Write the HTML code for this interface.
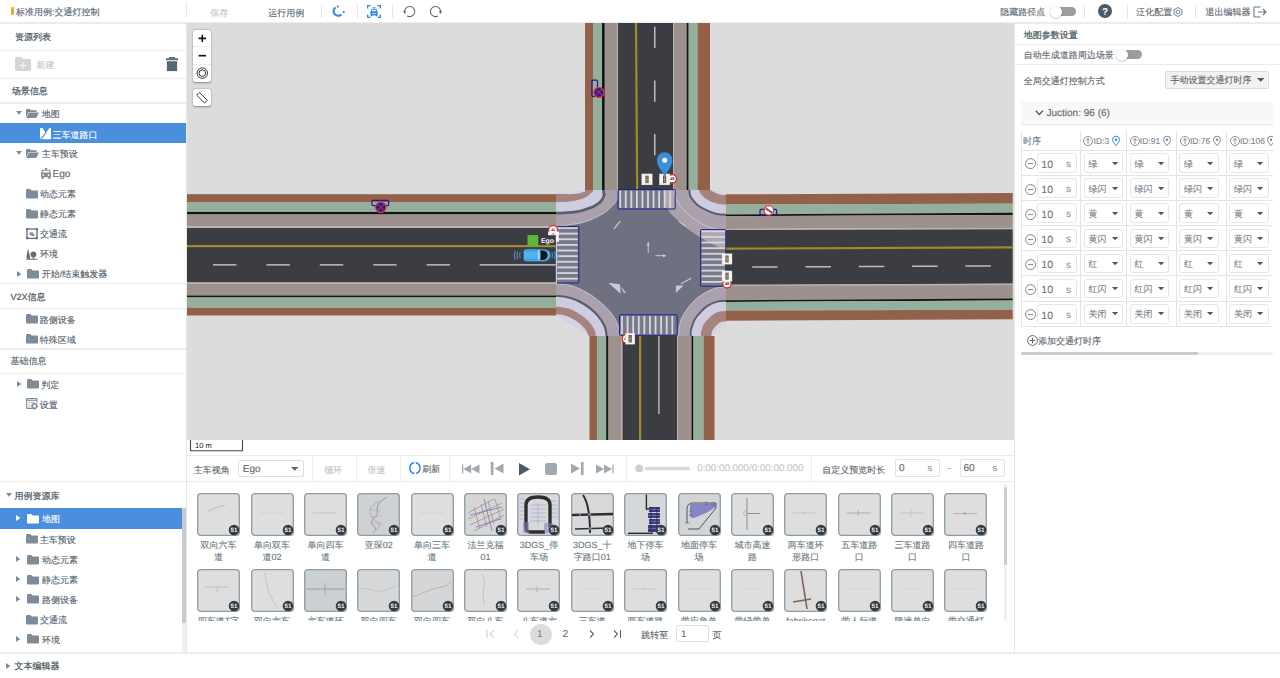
<!DOCTYPE html><html><head><meta charset="utf-8"><style>
*{box-sizing:border-box;margin:0;padding:0}
html,body{width:1280px;height:678px;overflow:hidden}
body{position:relative;background:#fff;font-family:"Liberation Sans",sans-serif;text-rendering:geometricPrecision;color:#52606a;font-size:9px}
.a{position:absolute}
.t{position:absolute;white-space:nowrap;line-height:12px;height:12px;font-size:9px;-webkit-text-stroke:0.12px currentColor}
.hl{background:#4a8fdd}
.sep{position:absolute;background:#e9e9e9}
svg{position:absolute;overflow:visible}
</style></head><body>
<div class="a" style="left:0px;top:21.8px;width:1280px;height:1.8px;background:#ececec;"></div>
<div class="a" style="left:11px;top:7px;width:3px;height:8px;background:#f6a623;border-radius:1px"></div>
<div class="t" style="left:16.0px;top:5.8px;color:#56646e;">标准用例:交通灯控制</div>
<div class="a" style="left:186px;top:2px;width:1px;height:15px;background:#e6e6e6;"></div>
<div class="t" style="left:210.3px;top:6.5px;color:#c4c8cc;">保存</div>
<div class="t" style="left:268.3px;top:6.5px;color:#56626c;">运行用例</div>
<div class="a" style="left:320.5px;top:4.5px;width:1px;height:13px;background:#e4e4e4;"></div>
<div class="a" style="left:356.5px;top:4.5px;width:1px;height:13px;background:#e4e4e4;"></div>
<div class="a" style="left:391.5px;top:4.5px;width:1px;height:13px;background:#e4e4e4;"></div>
<svg style="left:332px;top:5px;" width="14" height="13" viewBox="0 0 14 13"><path d="M3.56 2.43 A4.6 4.6 0 1 0 9.45 9.45" fill="none" stroke="#2d87e6" stroke-width="2"/><circle cx="5.8" cy="1.5" r="1.1" fill="#2d87e6"/><circle cx="11.7" cy="7.1" r="1.1" fill="#2d87e6"/></svg>
<svg style="left:367px;top:4.5px;" width="14" height="13" viewBox="0 0 14 13"><g fill="none" stroke="#2d87e6" stroke-width="1.3"><path d="M0.7 3.5V0.7H3.5M10.5 0.7H13.3V3.5M13.3 9.5V12.3H10.5M3.5 12.3H0.7V9.5"/></g><path d="M5.4 2.2 H8.6 L8 3.3 H6Z" fill="#2d87e6"/><path d="M5 4.2 H9 L9.9 6.9 H4.1Z" fill="none" stroke="#2d87e6" stroke-width="1.1"/><rect x="3.4" y="6.8" width="7.2" height="3.6" rx="0.6" fill="#2d87e6"/><rect x="3.6" y="10" width="1.6" height="1.3" fill="#2d87e6"/><rect x="8.8" y="10" width="1.6" height="1.3" fill="#2d87e6"/><path d="M5.2 8.6 H8.8" stroke="#fff" stroke-width="0.8"/></svg>
<svg style="left:403px;top:5px;" width="13.2" height="13" viewBox="0 0 13.2 13"><path d="M1.67 7.3 A5.1 5.1 0 1 1 4.05 10.87" fill="none" stroke="#56646f" stroke-width="1.05"/><path d="M0.1 6.2 L3.3 6.2 L1.7 9Z" fill="#56646f"/></svg>
<svg style="left:429px;top:5px;" width="13.2" height="13" viewBox="0 0 13.2 13"><path d="M11.53 7.3 A5.1 5.1 0 1 0 9.15 10.87" fill="none" stroke="#56646f" stroke-width="1.05"/><path d="M13.1 6.2 L9.9 6.2 L11.5 9Z" fill="#56646f"/></svg>
<div class="t" style="left:1000.3px;top:5.8px;color:#5b6770;">隐藏路径点</div>
<div class="a" style="left:1051px;top:7.2px;width:25px;height:9px;background:#9d9d9d;border-radius:5px"></div>
<div class="a" style="left:1050px;top:5.8px;width:12px;height:12px;border-radius:50%;background:#fff;box-shadow:0 0.5px 1.5px rgba(0,0,0,.35)"></div>
<div class="a" style="left:1083.5px;top:4.5px;width:1px;height:14px;background:#e4e4e4;"></div>
<svg style="left:1098px;top:4.3px;" width="14" height="14" viewBox="0 0 14 14"><circle cx="7" cy="7" r="7" fill="#4c5b68"/><text x="7" y="10.6" text-anchor="middle" font-family="Liberation Sans" font-weight="bold" font-size="10" fill="#fff">?</text></svg>
<div class="a" style="left:1127px;top:4.5px;width:1px;height:14px;background:#e4e4e4;"></div>
<div class="t" style="left:1136.3px;top:6.3px;color:#5b6770;">泛化配置</div>
<svg style="left:1173px;top:7px;" width="10" height="10" viewBox="0 0 10 10"><path d="M5 0.5 L9 2.8 V7.2 L5 9.5 L1 7.2 V2.8Z" fill="none" stroke="#6d7880" stroke-width="0.9"/><circle cx="5" cy="5" r="1.9" fill="none" stroke="#6d7880" stroke-width="0.9"/></svg>
<div class="a" style="left:1195px;top:4.5px;width:1px;height:14px;background:#e4e4e4;"></div>
<div class="t" style="left:1205.4px;top:6.3px;color:#5b6770;">退出编辑器</div>
<svg style="left:1253px;top:5.5px;" width="14" height="12" viewBox="0 0 14 12"><path d="M7.5 1 H1.8 Q1 1 1 1.8 V10.2 Q1 11 1.8 11 H7.5" fill="none" stroke="#6d7880" stroke-width="1.1"/><path d="M5 6 H13 M10 3 L13 6 L10 9" fill="none" stroke="#6d7880" stroke-width="1.1"/></svg>
<div class="a" style="left:186px;top:23px;width:1px;height:630px;background:#e6e6e6;"></div>
<div class="t" style="left:15.0px;top:31.4px;color:#4f5b64;-webkit-text-stroke:0.22px currentColor;">资源列表</div>
<div class="a" style="left:0px;top:49.5px;width:186px;height:1px;background:#ebebeb;"></div>
<svg style="left:15px;top:56.9px;" width="16" height="14" viewBox="0 0 16 14"><path d="M0 1.5 Q0 0 1.5 0 H6.5 L8 2 H14.5 Q16 2 16 3.5 V12.5 Q16 14 14.5 14 H1.5 Q0 14 0 12.5Z" fill="#d2d5d8"/><path d="M8 5.2 V11.8 M4.6 8.5 H11.4" stroke="#f2f3f4" stroke-width="1.3"/></svg>
<div class="t" style="left:36.4px;top:59.1px;color:#c6c9cc;">新建</div>
<svg style="left:166px;top:56.8px;" width="12" height="14.2" viewBox="0 0 12 14.2"><rect x="3" y="0" width="6" height="1.5" fill="#586670"/><rect x="0" y="1.3" width="12" height="1.9" fill="#586670"/><rect x="0.9" y="4.2" width="10.2" height="9.9" fill="#586670"/></svg>
<div class="a" style="left:0px;top:78.3px;width:186px;height:1px;background:#ebebeb;"></div>
<div class="t" style="left:11.8px;top:85.0px;color:#4f5b64;-webkit-text-stroke:0.22px currentColor;">场景信息</div>
<div class="a" style="left:0px;top:102px;width:186px;height:1.5px;background:#ececec;"></div>
<svg style="left:16px;top:111.0px;" width="6" height="4" viewBox="0 0 6 4"><path d="M0 0 H6 L3 3.8Z" fill="#7d8c98"/></svg>
<svg style="left:26.2px;top:109.1px;" width="13" height="9" viewBox="0 0 13 9"><path d="M0 1 Q0 0 1 0 H3.8 L5 1.2 H9.8 Q10.6 1.2 10.6 2 V3 H2.6 L0 8.6Z" fill="#7d8c98"/><path d="M2.9 3.6 H13 L10.4 9 H0.4Z" fill="#7d8c98"/></svg>
<div class="t" style="left:41.7px;top:108.3px;">地图</div>
<div class="a" style="left:0px;top:123px;width:186px;height:20px;background:#4a8fdd;"></div>
<svg style="left:40px;top:127.8px;" width="11" height="11.2" viewBox="0 0 11 11.2"><rect x="0" y="0" width="11" height="11.2" rx="0.8" fill="#fff"/><path d="M2.6 -0.2 L9.6 -0.2 L5.6 5.2Z" fill="#4a8fdd"/><path d="M5.8 4.8 L0.8 11.4" stroke="#4a8fdd" stroke-width="1.1"/></svg>
<div class="t" style="left:52.6px;top:128.7px;color:#ffffff;">三车道路口</div>
<svg style="left:16px;top:151.0px;" width="6" height="4" viewBox="0 0 6 4"><path d="M0 0 H6 L3 3.8Z" fill="#7d8c98"/></svg>
<svg style="left:26.2px;top:149.1px;" width="13" height="9" viewBox="0 0 13 9"><path d="M0 1 Q0 0 1 0 H3.8 L5 1.2 H9.8 Q10.6 1.2 10.6 2 V3 H2.6 L0 8.6Z" fill="#7d8c98"/><path d="M2.9 3.6 H13 L10.4 9 H0.4Z" fill="#7d8c98"/></svg>
<div class="t" style="left:41.7px;top:148.3px;">主车预设</div>
<svg style="left:40.5px;top:167.5px;" width="10" height="11" viewBox="0 0 10 11"><rect x="3.8" y="0" width="2.4" height="1.6" fill="#7d8c98"/><path d="M1.6 2.2 H8.4 L9.2 5 H0.8Z" fill="none" stroke="#7d8c98" stroke-width="1.1"/><rect x="0" y="5" width="10" height="4.3" rx="0.8" fill="#7d8c98"/><rect x="0.6" y="9" width="2" height="2" fill="#7d8c98"/><rect x="7.4" y="9" width="2" height="2" fill="#7d8c98"/><circle cx="2.3" cy="7.1" r="0.9" fill="#fff"/><circle cx="7.7" cy="7.1" r="0.9" fill="#fff"/></svg>
<div class="t" style="left:52.4px;top:168.5px;color:#5b6770;font-size:10.2px;">Ego</div>
<svg style="left:26.2px;top:188.6px;" width="12" height="10" viewBox="0 0 12 10"><path d="M0 1.2 Q0 0 1.2 0 H4.3 L5.6 1.4 H10.8 Q12 1.4 12 2.6 V8.6 Q12 9.6 10.8 9.6 H1.2 Q0 9.6 0 8.6Z" fill="#7d8c98"/></svg>
<div class="t" style="left:39.9px;top:188.3px;">动态元素</div>
<svg style="left:26.2px;top:208.6px;" width="12" height="10" viewBox="0 0 12 10"><path d="M0 1.2 Q0 0 1.2 0 H4.3 L5.6 1.4 H10.8 Q12 1.4 12 2.6 V8.6 Q12 9.6 10.8 9.6 H1.2 Q0 9.6 0 8.6Z" fill="#7d8c98"/></svg>
<div class="t" style="left:39.9px;top:208.3px;">静态元素</div>
<svg style="left:26px;top:227.6px;" width="12" height="11.4" viewBox="0 0 12 11.4"><rect x="1" y="1" width="10" height="9.4" fill="none" stroke="#5f6d79" stroke-width="1.3"/><rect x="0.2" y="0.2" width="2" height="2" fill="#5f6d79"/><rect x="9.8" y="0.2" width="2" height="2" fill="#5f6d79"/><rect x="0.2" y="9.2" width="2" height="2" fill="#5f6d79"/><rect x="9.8" y="9.2" width="2" height="2" fill="#5f6d79"/><path d="M3.8 4.3 H6.6 L7.4 5.6 V7 H3.4 V5.4Z" fill="#8c98a2"/><path d="M5.2 6.4 H8.6 V8 H5.2Z" fill="#7a8893"/></svg>
<div class="t" style="left:39.9px;top:228.3px;">交通流</div>
<svg style="left:26px;top:247.5px;" width="12" height="12" viewBox="0 0 12 12"><path d="M0.4 11.2 H11.4" stroke="#5f6d79" stroke-width="1"/><path d="M2.2 0.4 C1.4 4 0.4 7.5 0.6 10.8 H4.4 C3.6 7.5 3 4 2.2 0.4Z" fill="#5f6d79"/><circle cx="7.4" cy="6.5" r="2.9" fill="#5f6d79"/><rect x="6.9" y="8" width="1" height="3.2" fill="#5f6d79"/></svg>
<div class="t" style="left:39.9px;top:248.3px;">环境</div>
<svg style="left:16.6px;top:270.5px;" width="4.5" height="6" viewBox="0 0 4.5 6"><path d="M0 0 V6 L4.3 3Z" fill="#7d8c98"/></svg>
<svg style="left:27px;top:268.59999999999997px;" width="12" height="10" viewBox="0 0 12 10"><path d="M0 1.2 Q0 0 1.2 0 H4.3 L5.6 1.4 H10.8 Q12 1.4 12 2.6 V8.6 Q12 9.6 10.8 9.6 H1.2 Q0 9.6 0 8.6Z" fill="#7d8c98"/></svg>
<div class="t" style="left:41.7px;top:268.3px;">开始/结束触发器</div>
<div class="a" style="left:0px;top:283.3px;width:186px;height:1px;background:#ebebeb;"></div>
<div class="t" style="left:10.5px;top:290.6px;color:#4f5b64;-webkit-text-stroke:0.22px currentColor;">V2X信息</div>
<div class="a" style="left:0px;top:307.8px;width:186px;height:1px;background:#ebebeb;"></div>
<svg style="left:26.1px;top:314.0px;" width="12" height="10" viewBox="0 0 12 10"><path d="M0 1.2 Q0 0 1.2 0 H4.3 L5.6 1.4 H10.8 Q12 1.4 12 2.6 V8.6 Q12 9.6 10.8 9.6 H1.2 Q0 9.6 0 8.6Z" fill="#7d8c98"/></svg>
<div class="t" style="left:39.7px;top:313.6px;">路侧设备</div>
<svg style="left:26.1px;top:334.0px;" width="12" height="10" viewBox="0 0 12 10"><path d="M0 1.2 Q0 0 1.2 0 H4.3 L5.6 1.4 H10.8 Q12 1.4 12 2.6 V8.6 Q12 9.6 10.8 9.6 H1.2 Q0 9.6 0 8.6Z" fill="#7d8c98"/></svg>
<div class="t" style="left:39.7px;top:333.6px;">特殊区域</div>
<div class="a" style="left:0px;top:348px;width:186px;height:1.6px;background:#ececec;"></div>
<div class="t" style="left:10.5px;top:355.2px;color:#56636c;-webkit-text-stroke:0.12px currentColor;">基础信息</div>
<div class="a" style="left:0px;top:372.5px;width:186px;height:1px;background:#ebebeb;"></div>
<svg style="left:16.6px;top:380.8px;" width="4.5" height="6" viewBox="0 0 4.5 6"><path d="M0 0 V6 L4.3 3Z" fill="#7d8c98"/></svg>
<svg style="left:27px;top:379.0px;" width="12" height="10" viewBox="0 0 12 10"><path d="M0 1.2 Q0 0 1.2 0 H4.3 L5.6 1.4 H10.8 Q12 1.4 12 2.6 V8.6 Q12 9.6 10.8 9.6 H1.2 Q0 9.6 0 8.6Z" fill="#7d8c98"/></svg>
<div class="t" style="left:41.3px;top:379.3px;">判定</div>
<svg style="left:26px;top:398.2px;" width="12.5" height="11.5" viewBox="0 0 12.5 11.5"><path d="M8 10.4 H1 Q0.6 10.4 0.6 10 V1.1 Q0.6 0.6 1.1 0.6 H10.4 Q10.9 0.6 10.9 1.1 V4.8" fill="none" stroke="#7d8c98" stroke-width="1.1"/><path d="M0.6 2.4 H10.9" stroke="#7d8c98" stroke-width="0.9"/><path d="M2.4 4.4 H4 M5 4.4 H8 M2.4 6.4 H4 M2.4 8.4 H3.6" stroke="#7d8c98" stroke-width="0.7"/><circle cx="8.5" cy="8.1" r="2.4" fill="none" stroke="#7d8c98" stroke-width="1.5"/><path d="M8.5 4.7 V5.8 M8.5 10.4 V11.5 M5.1 8.1 H6.2 M10.8 8.1 H11.9" stroke="#7d8c98" stroke-width="1"/></svg>
<div class="t" style="left:39.7px;top:399.3px;">设置</div>
<div class="a" style="left:0px;top:481px;width:186px;height:1px;background:#ebebeb;"></div>
<svg style="left:5.6px;top:492.7px;" width="6" height="4" viewBox="0 0 6 4"><path d="M0 0 H6 L3 3.8Z" fill="#7d8c98"/></svg>
<div class="t" style="left:14.6px;top:489.7px;color:#4f5b64;-webkit-text-stroke:0.22px currentColor;">用例资源库</div>
<div class="a" style="left:0px;top:508.4px;width:182px;height:20.2px;background:#4a8fdd;"></div>
<svg style="left:16px;top:515.4px;" width="4.5" height="6" viewBox="0 0 4.5 6"><path d="M0 0 V6 L4.3 3Z" fill="#ffffff"/></svg>
<svg style="left:27px;top:513.6px;" width="12" height="10" viewBox="0 0 12 10"><path d="M0 1.2 Q0 0 1.2 0 H4.3 L5.6 1.4 H10.8 Q12 1.4 12 2.6 V8.6 Q12 9.6 10.8 9.6 H1.2 Q0 9.6 0 8.6Z" fill="#ffffff"/></svg>
<div class="t" style="left:42.0px;top:513.3px;color:#ffffff;">地图</div>
<svg style="left:26px;top:534.1px;" width="12" height="10" viewBox="0 0 12 10"><path d="M0 1.2 Q0 0 1.2 0 H4.3 L5.6 1.4 H10.8 Q12 1.4 12 2.6 V8.6 Q12 9.6 10.8 9.6 H1.2 Q0 9.6 0 8.6Z" fill="#7d8c98"/></svg>
<div class="t" style="left:39.7px;top:533.7px;">主车预设</div>
<svg style="left:16.3px;top:556.3px;" width="4.5" height="6" viewBox="0 0 4.5 6"><path d="M0 0 V6 L4.3 3Z" fill="#7d8c98"/></svg>
<svg style="left:26.8px;top:554.5px;" width="12" height="10" viewBox="0 0 12 10"><path d="M0 1.2 Q0 0 1.2 0 H4.3 L5.6 1.4 H10.8 Q12 1.4 12 2.6 V8.6 Q12 9.6 10.8 9.6 H1.2 Q0 9.6 0 8.6Z" fill="#7d8c98"/></svg>
<div class="t" style="left:41.9px;top:554.1px;">动态元素</div>
<svg style="left:16.3px;top:576.3px;" width="4.5" height="6" viewBox="0 0 4.5 6"><path d="M0 0 V6 L4.3 3Z" fill="#7d8c98"/></svg>
<svg style="left:26.8px;top:574.5px;" width="12" height="10" viewBox="0 0 12 10"><path d="M0 1.2 Q0 0 1.2 0 H4.3 L5.6 1.4 H10.8 Q12 1.4 12 2.6 V8.6 Q12 9.6 10.8 9.6 H1.2 Q0 9.6 0 8.6Z" fill="#7d8c98"/></svg>
<div class="t" style="left:41.9px;top:574.1px;">静态元素</div>
<svg style="left:16.3px;top:596.2px;" width="4.5" height="6" viewBox="0 0 4.5 6"><path d="M0 0 V6 L4.3 3Z" fill="#7d8c98"/></svg>
<svg style="left:26.8px;top:594.4000000000001px;" width="12" height="10" viewBox="0 0 12 10"><path d="M0 1.2 Q0 0 1.2 0 H4.3 L5.6 1.4 H10.8 Q12 1.4 12 2.6 V8.6 Q12 9.6 10.8 9.6 H1.2 Q0 9.6 0 8.6Z" fill="#7d8c98"/></svg>
<div class="t" style="left:41.9px;top:594.0px;">路侧设备</div>
<svg style="left:26.1px;top:614.7px;" width="12" height="10" viewBox="0 0 12 10"><path d="M0 1.2 Q0 0 1.2 0 H4.3 L5.6 1.4 H10.8 Q12 1.4 12 2.6 V8.6 Q12 9.6 10.8 9.6 H1.2 Q0 9.6 0 8.6Z" fill="#7d8c98"/></svg>
<div class="t" style="left:40.0px;top:614.3px;">交通流</div>
<svg style="left:16.3px;top:636.2px;" width="4.5" height="6" viewBox="0 0 4.5 6"><path d="M0 0 V6 L4.3 3Z" fill="#7d8c98"/></svg>
<svg style="left:26.8px;top:634.4000000000001px;" width="12" height="10" viewBox="0 0 12 10"><path d="M0 1.2 Q0 0 1.2 0 H4.3 L5.6 1.4 H10.8 Q12 1.4 12 2.6 V8.6 Q12 9.6 10.8 9.6 H1.2 Q0 9.6 0 8.6Z" fill="#7d8c98"/></svg>
<div class="t" style="left:41.9px;top:634.0px;">环境</div>
<div class="a" style="left:182.3px;top:508.4px;width:3.4px;height:144px;background:#efefef;"></div>
<div class="a" style="left:182.3px;top:508.4px;width:3.4px;height:115px;background:#c8cacc;border-radius:1.5px"></div>
<div class="a" style="left:0px;top:652.2px;width:1280px;height:1.6px;background:#ececec;"></div>
<svg style="left:6px;top:662.6px;" width="4.5" height="6" viewBox="0 0 4.5 6"><path d="M0 0 V6 L4.3 3Z" fill="#7d8c98"/></svg>
<div class="t" style="left:14.5px;top:660.1px;color:#4f5b64;-webkit-text-stroke:0.22px currentColor;">文本编辑器</div>
<svg style="left:186px;top:23px;overflow:hidden" width="828" height="417" viewBox="186 23 828 417"><rect x="186" y="23" width="828" height="417" fill="#dcdcdc"/><rect x="187" y="194.2" width="370" height="8.30" fill="#93604a"/><rect x="187" y="202.5" width="370" height="9.40" fill="#94b09c"/><rect x="187" y="211.9" width="370" height="2.60" fill="#141414"/><rect x="187" y="214.5" width="370" height="11.80" fill="#9c918d"/><rect x="187" y="226.3" width="370" height="1.70" fill="#b8b2b4"/><rect x="187" y="228" width="370" height="54.50" fill="#3c3d42"/><rect x="187" y="282.5" width="370" height="1.30" fill="#b8b2b4"/><rect x="187" y="283.8" width="370" height="11.70" fill="#9c918d"/><rect x="187" y="295.5" width="370" height="2.00" fill="#141414"/><rect x="187" y="297.5" width="370" height="10.30" fill="#94b09c"/><rect x="187" y="307.8" width="370" height="7.70" fill="#93604a"/><rect x="187" y="245" width="370" height="2.2" fill="#a08b2b"/><rect x="213.0" y="264.1" width="23.4" height="1.5" fill="#bdbdbd"/><rect x="266.4" y="264.1" width="23.4" height="1.5" fill="#bdbdbd"/><rect x="319.8" y="264.1" width="23.4" height="1.5" fill="#bdbdbd"/><rect x="373.2" y="264.1" width="23.4" height="1.5" fill="#bdbdbd"/><rect x="426.6" y="264.1" width="23.4" height="1.5" fill="#bdbdbd"/><rect x="479.7" y="264.1" width="77" height="1.5" fill="#bdbdbd"/><polygon points="725,194.3 1012.7,193.04999999999998 1012.7,203.65 725,204.6" fill="#93604a"/><polygon points="725,204.6 1012.7,203.54999999999998 1012.7,212.95000000000002 725,214.4" fill="#94b09c"/><polygon points="725,214.4 1012.7,212.85 1012.7,215.05 725,216.2" fill="#141414"/><polygon points="725,216.2 1012.7,214.95 1012.7,227.95000000000002 725,228.9" fill="#9c918d"/><polygon points="725,228.9 1012.7,227.85 1012.7,229.35000000000002 725,230" fill="#b8b2b4"/><polygon points="725,230 1012.7,229.25 1012.7,283.65000000000003 725,284.8" fill="#3c3d42"/><polygon points="725,284.8 1012.7,283.55 1012.7,285.05 725,286" fill="#b8b2b4"/><polygon points="725,286 1012.7,284.95 1012.7,298.65000000000003 725,300.3" fill="#9c918d"/><polygon points="725,300.3 1012.7,298.55 1012.7,300.55 725,302" fill="#141414"/><polygon points="725,302 1012.7,300.45 1012.7,309.75 725,310.6" fill="#94b09c"/><polygon points="725,310.6 1012.7,309.65 1012.7,319.25 725,320.8" fill="#93604a"/><polygon points="725,247.6 1012.7,246.2 1012.7,248.4 725,249.8" fill="#a08b2b"/><polygon points="752.2,266.24 777.7,266.14 777.7,267.64 752.2,267.74" fill="#bdbdbd"/><polygon points="805.5,266.02 831.0,265.92 831.0,267.42 805.5,267.52" fill="#bdbdbd"/><polygon points="858.8,265.81 884.3,265.70 884.3,267.20 858.8,267.31" fill="#bdbdbd"/><polygon points="912.1,265.59 937.6,265.48 937.6,266.98 912.1,267.09" fill="#bdbdbd"/><polygon points="965.4,265.37 990.9,265.26 990.9,266.76 965.4,266.87" fill="#bdbdbd"/><rect x="585" y="23" width="8.00" height="168" fill="#93604a"/><rect x="593" y="23" width="9.00" height="168" fill="#94b09c"/><rect x="602" y="23" width="2.80" height="168" fill="#141414"/><rect x="604.8" y="23" width="12.20" height="168" fill="#9c918d"/><rect x="617" y="23" width="1.00" height="168" fill="#b8b2b4"/><rect x="618" y="23" width="55.00" height="168" fill="#3c3d42"/><rect x="673" y="23" width="1.00" height="168" fill="#b8b2b4"/><rect x="674" y="23" width="12.60" height="168" fill="#9c918d"/><rect x="686.6" y="23" width="2.10" height="168" fill="#141414"/><rect x="688.7" y="23" width="8.80" height="168" fill="#94b09c"/><rect x="697.5" y="23" width="12.50" height="168" fill="#93604a"/><polygon points="634.9,23 637.1,23 638.3,191 636.1,191" fill="#a08b2b"/><rect x="654" y="26.6" width="1.5" height="21.3" fill="#bdbdbd"/><rect x="654" y="80.5" width="1.5" height="21.3" fill="#bdbdbd"/><rect x="654" y="134.1" width="1.5" height="21.3" fill="#bdbdbd"/><rect x="589.5" y="335" width="7.70" height="105" fill="#93604a"/><rect x="597.2" y="335" width="9.00" height="105" fill="#94b09c"/><rect x="606.2" y="335" width="2.30" height="105" fill="#141414"/><rect x="608.5" y="335" width="13.00" height="105" fill="#9c918d"/><rect x="621.5" y="335" width="1.00" height="105" fill="#b8b2b4"/><rect x="622.5" y="335" width="54.50" height="105" fill="#3c3d42"/><rect x="677" y="335" width="1.00" height="105" fill="#b8b2b4"/><rect x="678" y="335" width="13.50" height="105" fill="#9c918d"/><rect x="691.5" y="335" width="2.00" height="105" fill="#141414"/><rect x="693.5" y="335" width="10.10" height="105" fill="#94b09c"/><rect x="703.6" y="335" width="10.90" height="105" fill="#93604a"/><rect x="639" y="335" width="2.2" height="105" fill="#a08b2b"/><rect x="658.2" y="336" width="1.4" height="78" fill="#bdbdbd"/><defs><clipPath id="jc"><rect x="556" y="190" width="170" height="146"/></clipPath><clipPath id="qTL"><rect x="556" y="190" width="85" height="73"/></clipPath><clipPath id="qTR"><rect x="641" y="190" width="85" height="73"/></clipPath><clipPath id="qBL"><rect x="556" y="263" width="85" height="73"/></clipPath><clipPath id="qBR"><rect x="641" y="263" width="85" height="73"/></clipPath></defs><rect x="556" y="190" width="170" height="146" fill="#6f7080"/><g clip-path="url(#qTL)"><rect x="500" y="150" width="300" height="250" fill="#d6d4e4"/><path d="M585.00 150.00 C585.03 156.33 585.53 181.00 585.20 188.00 C584.87 195.00 584.20 191.07 583.00 192.00 C581.80 192.93 580.17 193.23 578.00 193.60 C575.83 193.97 573.67 194.12 570.00 194.20 C566.33 194.28 564.33 194.12 556.00 194.10 C547.67 194.08 526.00 194.10 520.00 194.10 L520 400 L800 400 L800 150 Z" fill="#a5837f"/><path d="M593.00 150.00 C593.00 156.33 593.33 180.83 593.00 188.00 C592.67 195.17 592.17 191.50 591.00 193.00 C589.83 194.50 588.17 195.83 586.00 197.00 C583.83 198.17 581.00 199.20 578.00 200.00 C575.00 200.80 571.67 201.43 568.00 201.80 C564.33 202.17 564.00 202.10 556.00 202.20 C548.00 202.30 526.00 202.37 520.00 202.40 L520 400 L800 400 L800 150 Z" fill="#cecce0"/><path d="M603.40 150.00 C603.43 156.67 603.47 182.50 603.60 190.00 C603.73 197.50 604.68 193.08 604.20 195.00 C603.72 196.92 602.47 199.58 600.70 201.50 C598.93 203.42 596.27 205.13 593.60 206.50 C590.93 207.87 587.65 208.82 584.70 209.70 C581.75 210.58 578.35 211.35 575.90 211.80 C573.45 212.25 573.32 212.17 570.00 212.40 C566.68 212.63 564.33 213.07 556.00 213.20 C547.67 213.33 526.00 213.20 520.00 213.20 L520 400 L800 400 L800 150 Z" fill="#aaa1ad"/><path d="M603.40 150.00 C603.43 156.67 603.47 182.50 603.60 190.00 C603.73 197.50 604.68 193.08 604.20 195.00 C603.72 196.92 602.47 199.58 600.70 201.50 C598.93 203.42 596.27 205.13 593.60 206.50 C590.93 207.87 587.65 208.82 584.70 209.70 C581.75 210.58 578.35 211.35 575.90 211.80 C573.45 212.25 573.32 212.17 570.00 212.40 C566.68 212.63 564.33 213.07 556.00 213.20 C547.67 213.33 526.00 213.20 520.00 213.20" fill="none" stroke="#5d5c6c" stroke-width="2.7"/><path d="M617.50 150.00 C617.50 157.00 617.65 183.62 617.50 192.00 C617.35 200.38 617.63 197.83 616.60 200.30 C615.57 202.77 613.17 204.83 611.30 206.80 C609.43 208.77 607.37 210.63 605.40 212.10 C603.43 213.57 601.47 214.52 599.50 215.60 C597.53 216.68 595.57 217.70 593.60 218.60 C591.63 219.50 589.67 220.32 587.70 221.00 C585.73 221.68 583.77 222.22 581.80 222.70 C579.83 223.18 577.87 223.58 575.90 223.90 C573.93 224.22 573.32 224.12 570.00 224.60 C566.68 225.08 564.33 226.32 556.00 226.80 C547.67 227.28 526.00 227.38 520.00 227.50 L520 400 L800 400 L800 150 Z" fill="#6f7080"/><path d="M617.50 150.00 C617.50 157.00 617.65 183.62 617.50 192.00 C617.35 200.38 617.63 197.83 616.60 200.30 C615.57 202.77 613.17 204.83 611.30 206.80 C609.43 208.77 607.37 210.63 605.40 212.10 C603.43 213.57 601.47 214.52 599.50 215.60 C597.53 216.68 595.57 217.70 593.60 218.60 C591.63 219.50 589.67 220.32 587.70 221.00 C585.73 221.68 583.77 222.22 581.80 222.70 C579.83 223.18 577.87 223.58 575.90 223.90 C573.93 224.22 573.32 224.12 570.00 224.60 C566.68 225.08 564.33 226.32 556.00 226.80 C547.67 227.28 526.00 227.38 520.00 227.50" fill="none" stroke="#c9c7da" stroke-width="0.9"/></g><g clip-path="url(#qTR)"><rect x="500" y="150" width="300" height="250" fill="#d6d4e4"/><path d="M711.00 150.00 C711.05 156.33 710.88 181.08 711.30 188.00 C711.72 194.92 712.38 190.50 713.50 191.50 C714.62 192.50 715.92 193.42 718.00 194.00 C720.08 194.58 719.00 194.92 726.00 195.00 C733.00 195.08 754.33 194.58 760.00 194.50 L760 400 L500 400 L500 150 Z" fill="#a5837f"/><path d="M699.00 150.00 C699.03 156.33 698.78 180.58 699.20 188.00 C699.62 195.42 700.20 192.58 701.50 194.50 C702.80 196.42 704.75 198.08 707.00 199.50 C709.25 200.92 711.83 202.15 715.00 203.00 C718.17 203.85 718.50 204.38 726.00 204.60 C733.50 204.82 754.33 204.35 760.00 204.30 L760 400 L500 400 L500 150 Z" fill="#cecce0"/><path d="M687.60 150.00 C687.88 156.67 688.62 181.95 689.30 190.00 C689.98 198.05 690.33 195.82 691.70 198.30 C693.07 200.78 695.15 202.98 697.50 204.90 C699.85 206.82 702.92 208.37 705.80 209.80 C708.68 211.23 711.43 212.67 714.80 213.50 C718.17 214.33 718.47 214.55 726.00 214.80 C733.53 215.05 754.33 214.97 760.00 215.00 L760 400 L500 400 L500 150 Z" fill="#aaa1ad"/><path d="M687.60 150.00 C687.88 156.67 688.62 181.95 689.30 190.00 C689.98 198.05 690.33 195.82 691.70 198.30 C693.07 200.78 695.15 202.98 697.50 204.90 C699.85 206.82 702.92 208.37 705.80 209.80 C708.68 211.23 711.43 212.67 714.80 213.50 C718.17 214.33 718.47 214.55 726.00 214.80 C733.53 215.05 754.33 214.97 760.00 215.00" fill="none" stroke="#5d5c6c" stroke-width="2"/><path d="M662.00 150.00 C662.33 158.00 663.03 188.03 664.00 198.00 C664.97 207.97 666.07 206.58 667.80 209.80 C669.53 213.02 671.93 214.82 674.40 217.30 C676.87 219.78 679.85 222.37 682.60 224.70 C685.35 227.03 688.00 229.23 690.90 231.30 C693.80 233.37 696.48 234.98 700.00 237.10 C703.52 239.22 705.33 240.85 712.00 244.00 C718.67 247.15 735.33 254.00 740.00 256.00 L760 400 L500 400 L500 150 Z" fill="#6f7080"/><path d="M673.50 150.00 C673.67 156.67 674.08 181.95 674.50 190.00 C674.92 198.05 675.05 195.68 676.00 198.30 C676.95 200.92 678.40 203.23 680.20 205.70 C682.00 208.17 684.33 210.77 686.80 213.10 C689.27 215.43 691.98 217.63 695.00 219.70 C698.02 221.77 701.60 223.98 704.90 225.50 C708.20 227.02 711.28 227.97 714.80 228.80 C718.32 229.63 718.47 230.38 726.00 230.50 C733.53 230.62 754.33 229.67 760.00 229.50" fill="none" stroke="#c9c7da" stroke-width="0.9"/></g><g clip-path="url(#qBL)"><rect x="500" y="150" width="300" height="250" fill="#d6d4e4"/><path d="M520.00 296.50 C525.83 296.37 546.42 295.42 555.00 295.70 C563.58 295.98 566.68 296.82 571.50 298.20 C576.32 299.58 580.05 301.67 583.90 304.00 C587.75 306.33 591.43 309.05 594.60 312.20 C597.77 315.35 600.90 318.93 602.90 322.90 C604.90 326.87 605.87 326.48 606.60 336.00 C607.33 345.52 607.18 372.67 607.30 380.00" fill="none" stroke="#a5837f" stroke-width="36.80"/><path d="M520.00 296.50 C525.83 296.37 546.42 295.42 555.00 295.70 C563.58 295.98 566.68 296.82 571.50 298.20 C576.32 299.58 580.05 301.67 583.90 304.00 C587.75 306.33 591.43 309.05 594.60 312.20 C597.77 315.35 600.90 318.93 602.90 322.90 C604.90 326.87 605.87 326.48 606.60 336.00 C607.33 345.52 607.18 372.67 607.30 380.00" fill="none" stroke="#cecce0" stroke-width="21.40"/><path d="M520.00 296.50 C525.83 296.37 546.42 295.42 555.00 295.70 C563.58 295.98 566.68 296.82 571.50 298.20 C576.32 299.58 580.05 301.67 583.90 304.00 C587.75 306.33 591.43 309.05 594.60 312.20 C597.77 315.35 600.90 318.93 602.90 322.90 C604.90 326.87 605.87 326.48 606.60 336.00 C607.33 345.52 607.18 372.67 607.30 380.00 L700 380 L700 150 L520 150 Z" fill="#aaa1ad"/><path d="M520.00 296.50 C525.83 296.37 546.42 295.42 555.00 295.70 C563.58 295.98 566.68 296.82 571.50 298.20 C576.32 299.58 580.05 301.67 583.90 304.00 C587.75 306.33 591.43 309.05 594.60 312.20 C597.77 315.35 600.90 318.93 602.90 322.90 C604.90 326.87 605.87 326.48 606.60 336.00 C607.33 345.52 607.18 372.67 607.30 380.00" fill="none" stroke="#5d5c6c" stroke-width="2.2"/><path d="M520.00 283.10 C525.83 283.20 546.42 283.25 555.00 283.70 C563.58 284.15 566.00 284.22 571.50 285.80 C577.00 287.38 583.18 290.45 588.00 293.20 C592.82 295.95 596.55 299.00 600.40 302.30 C604.25 305.60 608.35 309.57 611.10 313.00 C613.85 316.43 615.38 319.07 616.90 322.90 C618.42 326.73 619.35 326.48 620.20 336.00 C621.05 345.52 621.70 372.67 622.00 380.00 L700 380 L700 150 L520 150 Z" fill="#6f7080"/><path d="M520.00 283.10 C525.83 283.20 546.42 283.25 555.00 283.70 C563.58 284.15 566.00 284.22 571.50 285.80 C577.00 287.38 583.18 290.45 588.00 293.20 C592.82 295.95 596.55 299.00 600.40 302.30 C604.25 305.60 608.35 309.57 611.10 313.00 C613.85 316.43 615.38 319.07 616.90 322.90 C618.42 326.73 619.35 326.48 620.20 336.00 C621.05 345.52 621.70 372.67 622.00 380.00" fill="none" stroke="#c9c7da" stroke-width="0.9"/></g><g clip-path="url(#qBR)"><rect x="500" y="150" width="300" height="250" fill="#d6d4e4"/><path d="M760.00 301.00 C754.33 300.95 733.30 300.55 726.00 300.70 C718.70 300.85 719.28 301.03 716.20 301.90 C713.12 302.77 710.15 304.17 707.50 305.90 C704.85 307.63 702.43 310.03 700.30 312.30 C698.17 314.57 696.17 316.85 694.70 319.50 C693.23 322.15 692.17 325.45 691.50 328.20 C690.83 330.95 690.53 327.37 690.70 336.00 C690.87 344.63 692.20 372.67 692.50 380.00" fill="none" stroke="#a5837f" stroke-width="41.50"/><path d="M760.00 301.00 C754.33 300.95 733.30 300.55 726.00 300.70 C718.70 300.85 719.28 301.03 716.20 301.90 C713.12 302.77 710.15 304.17 707.50 305.90 C704.85 307.63 702.43 310.03 700.30 312.30 C698.17 314.57 696.17 316.85 694.70 319.50 C693.23 322.15 692.17 325.45 691.50 328.20 C690.83 330.95 690.53 327.37 690.70 336.00 C690.87 344.63 692.20 372.67 692.50 380.00" fill="none" stroke="#cecce0" stroke-width="20.50"/><path d="M760.00 301.00 C754.33 300.95 733.30 300.55 726.00 300.70 C718.70 300.85 719.28 301.03 716.20 301.90 C713.12 302.77 710.15 304.17 707.50 305.90 C704.85 307.63 702.43 310.03 700.30 312.30 C698.17 314.57 696.17 316.85 694.70 319.50 C693.23 322.15 692.17 325.45 691.50 328.20 C690.83 330.95 690.53 327.37 690.70 336.00 C690.87 344.63 692.20 372.67 692.50 380.00 L580 380 L580 150 L760 150 Z" fill="#aaa1ad"/><path d="M760.00 301.00 C754.33 300.95 733.30 300.55 726.00 300.70 C718.70 300.85 719.28 301.03 716.20 301.90 C713.12 302.77 710.15 304.17 707.50 305.90 C704.85 307.63 702.43 310.03 700.30 312.30 C698.17 314.57 696.17 316.85 694.70 319.50 C693.23 322.15 692.17 325.45 691.50 328.20 C690.83 330.95 690.53 327.37 690.70 336.00 C690.87 344.63 692.20 372.67 692.50 380.00" fill="none" stroke="#5d5c6c" stroke-width="1.9"/><path d="M760.00 285.30 C754.33 285.55 733.70 286.22 726.00 286.80 C718.30 287.38 717.82 287.48 713.80 288.80 C709.78 290.12 705.48 292.38 701.90 294.70 C698.32 297.02 695.10 299.77 692.30 302.70 C689.50 305.63 687.08 309.12 685.10 312.30 C683.12 315.48 681.52 317.85 680.40 321.80 C679.28 325.75 678.88 326.30 678.40 336.00 C677.92 345.70 677.65 372.67 677.50 380.00 L580 380 L580 150 L760 150 Z" fill="#6f7080"/><path d="M760.00 285.30 C754.33 285.55 733.70 286.22 726.00 286.80 C718.30 287.38 717.82 287.48 713.80 288.80 C709.78 290.12 705.48 292.38 701.90 294.70 C698.32 297.02 695.10 299.77 692.30 302.70 C689.50 305.63 687.08 309.12 685.10 312.30 C683.12 315.48 681.52 317.85 680.40 321.80 C679.28 325.75 678.88 326.30 678.40 336.00 C677.92 345.70 677.65 372.67 677.50 380.00" fill="none" stroke="#c9c7da" stroke-width="0.9"/></g><polygon points="556,315.4 556,336 589.2,336" fill="#dcdcdc"/><polygon points="556,190 585.5,190 556,193.7" fill="#dcdcdc"/><path d="M712 190 Q722 192 726 194.2 V190Z" fill="#dcdcdc"/><polygon points="725.5,322 726,336 712,336" fill="#dcdcdc"/><path d="M620.3 221.2 L613.7 229.1" stroke="#c9c9d8" stroke-width="1.3"/><path d="M648.2 243 V253" stroke="#c9c9d8" stroke-width="1"/><path d="M646.6 245.5 L648.2 241.8 L649.8 245.5Z" fill="#c9c9d8"/><path d="M655.5 255.7 H665" stroke="#c9c9d8" stroke-width="1"/><path d="M663 254 L666.5 255.7 L663 257.4Z" fill="#c9c9d8"/><path d="M681 283.8 L691.2 278.3" stroke="#c9c9d8" stroke-width="1.1"/><path d="M675.9 293 L675.9 285.6 L683.5 285.4Z" fill="#c9c9d8"/><path d="M608.3 282.8 L620 284.2 L620.6 293.8 Z M620.8 286.5 L626.2 292.6 L623.8 292.8Z" fill="#c9c9d8"/><path d="M679.2 221.6 L685.4 226" stroke="#c9c9d8" stroke-width="1.2"/><rect x="618" y="189.6" width="57.200000000000045" height="19.400000000000006" fill="#ffffff" opacity="0.07"/><rect x="619.30" y="190.6" width="1.8" height="17.400000000000006" fill="#d6d8de"/><rect x="624.86" y="190.6" width="1.8" height="17.400000000000006" fill="#d6d8de"/><rect x="630.42" y="190.6" width="1.8" height="17.400000000000006" fill="#d6d8de"/><rect x="635.98" y="190.6" width="1.8" height="17.400000000000006" fill="#d6d8de"/><rect x="641.54" y="190.6" width="1.8" height="17.400000000000006" fill="#d6d8de"/><rect x="647.10" y="190.6" width="1.8" height="17.400000000000006" fill="#d6d8de"/><rect x="652.66" y="190.6" width="1.8" height="17.400000000000006" fill="#d6d8de"/><rect x="658.22" y="190.6" width="1.8" height="17.400000000000006" fill="#d6d8de"/><rect x="663.78" y="190.6" width="1.8" height="17.400000000000006" fill="#d6d8de"/><rect x="669.34" y="190.6" width="1.8" height="17.400000000000006" fill="#d6d8de"/><rect x="618" y="189.6" width="57.200000000000045" height="19.400000000000006" fill="none" stroke="#1c1c88" stroke-width="0.95" rx="0.8"/><rect x="556.3" y="226.6" width="22.5" height="56.400000000000006" fill="#ffffff" opacity="0.07"/><rect x="557.3" y="227.10" width="20.5" height="1.8" fill="#d6d8de"/><rect x="557.3" y="232.73" width="20.5" height="1.8" fill="#d6d8de"/><rect x="557.3" y="238.36" width="20.5" height="1.8" fill="#d6d8de"/><rect x="557.3" y="243.99" width="20.5" height="1.8" fill="#d6d8de"/><rect x="557.3" y="249.62" width="20.5" height="1.8" fill="#d6d8de"/><rect x="557.3" y="255.25" width="20.5" height="1.8" fill="#d6d8de"/><rect x="557.3" y="260.88" width="20.5" height="1.8" fill="#d6d8de"/><rect x="557.3" y="266.51" width="20.5" height="1.8" fill="#d6d8de"/><rect x="557.3" y="272.14" width="20.5" height="1.8" fill="#d6d8de"/><rect x="557.3" y="277.77" width="20.5" height="1.8" fill="#d6d8de"/><rect x="556.3" y="226.6" width="22.5" height="56.400000000000006" fill="none" stroke="#1c1c88" stroke-width="0.95" rx="0.8"/><rect x="700.6" y="229.6" width="25.199999999999932" height="56.599999999999994" fill="#ffffff" opacity="0.07"/><rect x="701.6" y="230.40" width="23.199999999999932" height="1.8" fill="#d6d8de"/><rect x="701.6" y="236.02" width="23.199999999999932" height="1.8" fill="#d6d8de"/><rect x="701.6" y="241.64" width="23.199999999999932" height="1.8" fill="#d6d8de"/><rect x="701.6" y="247.26" width="23.199999999999932" height="1.8" fill="#d6d8de"/><rect x="701.6" y="252.88" width="23.199999999999932" height="1.8" fill="#d6d8de"/><rect x="701.6" y="258.50" width="23.199999999999932" height="1.8" fill="#d6d8de"/><rect x="701.6" y="264.12" width="23.199999999999932" height="1.8" fill="#d6d8de"/><rect x="701.6" y="269.74" width="23.199999999999932" height="1.8" fill="#d6d8de"/><rect x="701.6" y="275.36" width="23.199999999999932" height="1.8" fill="#d6d8de"/><rect x="701.6" y="280.98" width="23.199999999999932" height="1.8" fill="#d6d8de"/><rect x="700.6" y="229.6" width="25.199999999999932" height="56.599999999999994" fill="none" stroke="#1c1c88" stroke-width="0.95" rx="0.8"/><rect x="619.5" y="314.8" width="57.700000000000045" height="20.5" fill="#ffffff" opacity="0.07"/><rect x="621.10" y="315.8" width="1.8" height="18.5" fill="#d6d8de"/><rect x="626.69" y="315.8" width="1.8" height="18.5" fill="#d6d8de"/><rect x="632.28" y="315.8" width="1.8" height="18.5" fill="#d6d8de"/><rect x="637.87" y="315.8" width="1.8" height="18.5" fill="#d6d8de"/><rect x="643.46" y="315.8" width="1.8" height="18.5" fill="#d6d8de"/><rect x="649.05" y="315.8" width="1.8" height="18.5" fill="#d6d8de"/><rect x="654.64" y="315.8" width="1.8" height="18.5" fill="#d6d8de"/><rect x="660.23" y="315.8" width="1.8" height="18.5" fill="#d6d8de"/><rect x="665.82" y="315.8" width="1.8" height="18.5" fill="#d6d8de"/><rect x="671.41" y="315.8" width="1.8" height="18.5" fill="#d6d8de"/><rect x="619.5" y="314.8" width="57.700000000000045" height="20.5" fill="none" stroke="#1c1c88" stroke-width="0.95" rx="0.8"/><rect x="555.8" y="226.2" width="1.2" height="57.2" fill="#d0d0da"/><rect x="641.7" y="173.9" width="10.6" height="11" fill="#f4f4f4" stroke="#d0d0d0" stroke-width="0.3"/><rect x="645.4" y="175.7" width="3.2" height="7.4" fill="#555"/><circle cx="647.0" cy="177.1" r="0.9" fill="#e06070"/><circle cx="647.0" cy="179.4" r="0.9" fill="#e8b040"/><circle cx="647.0" cy="181.7" r="0.9" fill="#60b060"/><circle cx="672.3" cy="178.8" r="4.2" fill="#fff" stroke="#e02828" stroke-width="1.3"/><text x="672.3" y="180.4" text-anchor="middle" font-family="Liberation Sans" font-weight="bold" font-size="4.2" fill="#222">40</text><rect x="659.3" y="173.9" width="10.6" height="11" fill="#f4f4f4" stroke="#d0d0d0" stroke-width="0.3"/><rect x="663.0" y="175.7" width="3.2" height="7.4" fill="#555"/><circle cx="664.6" cy="177.1" r="0.9" fill="#e06070"/><circle cx="664.6" cy="179.4" r="0.9" fill="#e8b040"/><circle cx="664.6" cy="181.7" r="0.9" fill="#60b060"/><path d="M664.7 177.5 C662.5 171 657 167 657 160 A7.7 7.7 0 0 1 672.4 160 C672.4 167 666.9 171 664.7 177.5Z" fill="#3b8fd8"/><circle cx="664.7" cy="160.3" r="2.5" fill="#fff"/><circle cx="727" cy="283.8" r="4.2" fill="#fff" stroke="#e02828" stroke-width="1.3"/><text x="727" y="285.4" text-anchor="middle" font-family="Liberation Sans" font-weight="bold" font-size="4.2" fill="#222">40</text><rect x="722" y="253.7" width="10" height="10.5" fill="#f4f4f4" stroke="#d0d0d0" stroke-width="0.3"/><rect x="725.4" y="255.5" width="3.2" height="6.9" fill="#555"/><circle cx="727.0" cy="256.9" r="0.9" fill="#e06070"/><circle cx="727.0" cy="258.9" r="0.9" fill="#e8b040"/><circle cx="727.0" cy="261.0" r="0.9" fill="#60b060"/><rect x="722" y="270.9" width="10" height="10.5" fill="#f4f4f4" stroke="#d0d0d0" stroke-width="0.3"/><rect x="725.4" y="272.7" width="3.2" height="6.9" fill="#555"/><circle cx="727.0" cy="274.1" r="0.9" fill="#e06070"/><circle cx="727.0" cy="276.1" r="0.9" fill="#e8b040"/><circle cx="727.0" cy="278.2" r="0.9" fill="#60b060"/><circle cx="626.3" cy="338.8" r="4.2" fill="#fff" stroke="#e02828" stroke-width="1.3"/><text x="626.3" y="340.4" text-anchor="middle" font-family="Liberation Sans" font-weight="bold" font-size="4.2" fill="#222">40</text><rect x="625.6" y="333.2" width="9.3" height="11" fill="#f4f4f4" stroke="#d0d0d0" stroke-width="0.3"/><rect x="628.6" y="335.0" width="3.2" height="7.4" fill="#555"/><circle cx="630.2" cy="336.4" r="0.9" fill="#e06070"/><circle cx="630.2" cy="338.7" r="0.9" fill="#e8b040"/><circle cx="630.2" cy="341.0" r="0.9" fill="#60b060"/><circle cx="553.1" cy="230" r="4.4" fill="#fff" stroke="#e02828" stroke-width="1.2"/><text x="553.1" y="231.2" text-anchor="middle" font-family="Liberation Sans" font-weight="bold" font-size="3.8" fill="#333">40</text><rect x="548.1" y="231.5" width="10.8" height="10.3" fill="#f4f4f4"/><circle cx="553.3" cy="233.8" r="0.9" fill="#e06070"/><rect x="539.9" y="235.2" width="15.9" height="9.9" fill="#3a3b3f"/><text x="540.9" y="242.6" font-family="Liberation Sans" font-weight="bold" font-size="7" fill="#f4f4f4">Ego</text><rect x="527.5" y="235.1" width="10.7" height="10.7" fill="#5cb83a"/><g fill="none" stroke="#4aa8e8" stroke-width="0.9"><path d="M515.2 250.8 Q513.6 255.2 515.2 259.8"/><path d="M517.6 251.6 Q516.4 255.2 517.6 258.9"/><path d="M520 252.4 Q519.2 255.2 520 258"/><path d="M552 252.2 Q552.8 255.2 552 258.2"/><path d="M554.6 251.4 Q555.8 255.2 554.6 259"/><path d="M557.2 250.6 Q558.8 255.2 557.2 259.8"/></g><path d="M523.5 252.2 Q523.5 249 527.5 249 H542 Q550.6 249 550.6 255.2 Q550.6 261.5 542 261.5 H527.5 Q523.5 261.5 523.5 258.3Z" fill="#52b3ec" stroke="#1f5f92" stroke-width="0.6"/><path d="M540.2 250.4 H543 Q547.6 251 547.6 255.2 Q547.6 259.4 543 260 H540.2 Q541.2 255.2 540.2 250.4Z" fill="#101418"/><path d="M538.8 250.6 V259.8" stroke="#f0f6ff" stroke-width="0.9"/><path d="M526 251.4 Q531 250.2 537 250.8 M526 259 Q531 260.2 537 259.6" stroke="#2a7ab8" stroke-width="0.6" fill="none"/><rect x="372" y="200.3" width="16.6" height="5.3" rx="1" fill="none" stroke="#1a1a9a" stroke-width="1.2"/><circle cx="380.8" cy="207.3" r="5.2" fill="#1f1f9a" stroke="#e8322c" stroke-width="1.3"/><path d="M377.6 204.10000000000002 L384.0 210.5 M384.0 204.10000000000002 L377.6 210.5" stroke="#e8322c" stroke-width="1"/><rect x="591.9" y="80.2" width="5.6" height="16.2" rx="1" fill="none" stroke="#1a1a9a" stroke-width="1.2"/><circle cx="598.9" cy="92.4" r="5" fill="#1f1f9a" stroke="#e8322c" stroke-width="1.3"/><path d="M595.6999999999999 89.2 L602.1 95.60000000000001 M602.1 89.2 L595.6999999999999 95.60000000000001" stroke="#e8322c" stroke-width="1"/><rect x="760" y="209.4" width="16.6" height="5.8" rx="1" fill="none" stroke="#1a1a9a" stroke-width="1.2"/><circle cx="768.8" cy="210.4" r="4.7" fill="#fff" stroke="#e8322c" stroke-width="1.2"/><path d="M765.5 208.5 L772 212.5" stroke="#555" stroke-width="1.5"/><path d="M765.6 207 L772 213.8" stroke="#e8322c" stroke-width="0.9"/><rect x="186" y="23" width="1" height="417" fill="#e8e8e8"/></svg>
<div class="a" style="left:193px;top:30px;width:18px;height:52px;background:#fff;border-radius:2.5px;box-shadow:0 0.6px 2px rgba(0,0,0,.4)"></div>
<div class="a" style="left:193px;top:46.2px;width:18px;height:0.8px;background:#ececec;"></div>
<div class="a" style="left:193px;top:64px;width:18px;height:0.8px;background:#ececec;"></div>
<svg style="left:193px;top:30px;" width="18" height="52" viewBox="0 0 18 52"><path d="M202.3 34.7 V42.1 M198.6 38.4 H206" transform="translate(-193 -30)" stroke="#111" stroke-width="1.6"/><path d="M198.6 55.7 H206" transform="translate(-193 -30)" stroke="#111" stroke-width="1.6"/><circle cx="9.3" cy="43.1" r="5.2" fill="none" stroke="#222" stroke-width="0.9"/><circle cx="9.3" cy="43.1" r="3.3" fill="none" stroke="#222" stroke-width="0.9"/></svg>
<div class="a" style="left:193px;top:88.6px;width:18px;height:17.4px;background:#fff;border-radius:2.5px;box-shadow:0 0.6px 2px rgba(0,0,0,.4)"></div>
<svg style="left:193px;top:88.6px;" width="18" height="17.4" viewBox="0 0 18 17.4"><g transform="translate(9 8.7) rotate(45)"><rect x="-5.6" y="-1.9" width="11.2" height="3.8" fill="none" stroke="#333" stroke-width="0.9"/></g></svg>
<svg style="left:186px;top:440px;" width="60" height="14" viewBox="0 0 60 14"><path d="M4.5 0 V10.8 H56.5 V0" fill="none" stroke="#444" stroke-width="1.1"/><text x="9" y="8.3" font-family="Liberation Sans" font-size="7.6" fill="#222">10 m</text></svg>
<div class="a" style="left:187px;top:454.6px;width:827px;height:1px;background:#ebebeb;"></div>
<div class="a" style="left:187px;top:480.6px;width:827px;height:1px;background:#ebebeb;"></div>
<div class="t" style="left:193.7px;top:463.5px;color:#5b6770;">主车视角</div>
<div class="a" style="left:237.6px;top:459.7px;width:66px;height:17.6px;border:1px solid #dedede;border-radius:2px;background:#fff"></div>
<div class="t" style="left:242.8px;top:463.5px;color:#5b6770;font-size:10px;">Ego</div>
<svg style="left:290.5px;top:467px;" width="8" height="4" viewBox="0 0 8 4"><path d="M0 0 H7.6 L3.8 3.8Z" fill="#5b6770"/></svg>
<div class="a" style="left:312.4px;top:455.5px;width:1px;height:25px;background:#ebebeb;"></div>
<div class="a" style="left:355.6px;top:455.5px;width:1px;height:25px;background:#ebebeb;"></div>
<div class="a" style="left:399.5px;top:455.5px;width:1px;height:25px;background:#ebebeb;"></div>
<div class="a" style="left:449.2px;top:455.5px;width:1px;height:25px;background:#ebebeb;"></div>
<div class="a" style="left:625.5px;top:455.5px;width:1px;height:25px;background:#ebebeb;"></div>
<div class="a" style="left:811.4px;top:455.5px;width:1px;height:25px;background:#ebebeb;"></div>
<div class="t" style="left:324.2px;top:463.5px;color:#c0c4c8;">循环</div>
<div class="t" style="left:367.5px;top:463.5px;color:#c0c4c8;">倍速</div>
<svg style="left:409px;top:462.4px;" width="12" height="12" viewBox="0 0 12 12"><path d="M5.3 0.6 A5.6 5.6 0 0 0 5.6 11.6" fill="none" stroke="#2d87e6" stroke-width="1.5"/><path d="M6.8 0.7 A5.6 5.6 0 0 1 7 11.5" fill="none" stroke="#2d87e6" stroke-width="1.5"/></svg>
<div class="t" style="left:422.2px;top:462.8px;color:#5b6770;">刷新</div>
<svg style="left:461.5px;top:463.5px;" width="18" height="10" viewBox="0 0 18 10"><rect x="0" y="0.5" width="1.3" height="9" fill="#a1a9b0"/><path d="M1.5 5 L9.2 0.5 V9.5Z M9.2 5 L17.5 0.5 V9.5Z" fill="#a1a9b0"/></svg>
<svg style="left:490px;top:462px;" width="14" height="13" viewBox="0 0 14 13"><rect x="0.8" y="0" width="2.6" height="13" fill="#a1a9b0" /><path d="M4.5 6.5 L13.5 1.5 V11.5Z" fill="#a1a9b0"/></svg>
<svg style="left:518.8px;top:462.7px;" width="11" height="12.5" viewBox="0 0 11 12.5"><path d="M0 0 L11 6.25 L0 12.5Z" fill="#4b5a67"/></svg>
<svg style="left:545px;top:462.9px;" width="12" height="12" viewBox="0 0 12 12"><rect width="12" height="12" rx="2" fill="#a1a9b0"/></svg>
<svg style="left:570.8px;top:462px;" width="13" height="13" viewBox="0 0 13 13"><path d="M0 1.5 L9 6.5 L0 11.5Z" fill="#a1a9b0"/><rect x="10" y="0" width="2.6" height="13" fill="#a1a9b0"/></svg>
<svg style="left:595.8px;top:463.5px;" width="18" height="10" viewBox="0 0 18 10"><path d="M0 0.5 L8 5 L0 9.5Z M8 0.5 L16 5 L8 9.5Z" fill="#a1a9b0"/><rect x="16.4" y="0.5" width="1.2" height="9" fill="#a1a9b0"/></svg>
<svg style="left:635px;top:464px;" width="56" height="9" viewBox="0 0 56 9"><rect x="9.5" y="2.7" width="45.4" height="3.5" rx="1.75" fill="#d9dadc"/><circle cx="4.3" cy="4.4" r="3.9" fill="#d0d0d2"/></svg>
<div class="t" style="left:697.2px;top:463.0px;color:#c3c7cb;font-size:9.8px;">0:00:00.000/0:00:00.000</div>
<div class="t" style="left:822.3px;top:463.5px;color:#5b6770;">自定义预览时长</div>
<div class="a" style="left:894.7px;top:458.9px;width:45px;height:18.3px;border:1px solid #e3e3e3;border-radius:2px"></div>
<div class="t" style="left:899.0px;top:463.1px;color:#5b6770;font-size:10px;">0</div>
<div class="t" style="left:927.5px;top:463.1px;color:#8a949b;font-size:9.5px;">s</div>
<div class="t" style="left:947.5px;top:462.7px;color:#8a949b;font-size:10px;">-</div>
<div class="a" style="left:959.9px;top:458.9px;width:45px;height:18.3px;border:1px solid #e3e3e3;border-radius:2px"></div>
<div class="t" style="left:963.5px;top:463.1px;color:#5b6770;font-size:10px;">60</div>
<div class="t" style="left:992.5px;top:463.1px;color:#8a949b;font-size:9.5px;">s</div>
<div class="a" style="left:187px;top:481px;width:826px;height:139.5px;overflow:hidden">
<svg style="left:10.1px;top:11.5px" width="43" height="43" viewBox="0 0 43 43"><rect x="0.7" y="0.7" width="41.6" height="41.6" rx="3" fill="#dedede" stroke="#8d9ca6" stroke-width="1.3"/><path d="M10 19 Q18 14 28 12" stroke="#b8b8b8" stroke-width="0.8" fill="none"/><circle cx="37" cy="37" r="5.3" fill="#343b41"/><text x="37" y="39.3" text-anchor="middle" font-family="Liberation Sans" font-weight="bold" font-size="6.2" fill="#f4f4f4">51</text></svg>
<div class="t" style="left:1.6px;top:57.7px;width:60px;text-align:center;color:#6c7880">双向六车</div>
<div class="t" style="left:1.6px;top:69.7px;width:60px;text-align:center;color:#6c7880">道</div>
<svg style="left:63.5px;top:11.5px" width="43" height="43" viewBox="0 0 43 43"><rect x="0.7" y="0.7" width="41.6" height="41.6" rx="3" fill="#dedede" stroke="#8d9ca6" stroke-width="1.3"/><path d="M9 20 H33" stroke="#cfcfcf" stroke-width="0.8"/><circle cx="37" cy="37" r="5.3" fill="#343b41"/><text x="37" y="39.3" text-anchor="middle" font-family="Liberation Sans" font-weight="bold" font-size="6.2" fill="#f4f4f4">51</text></svg>
<div class="t" style="left:55.0px;top:57.7px;width:60px;text-align:center;color:#6c7880">单向双车</div>
<div class="t" style="left:55.0px;top:69.7px;width:60px;text-align:center;color:#6c7880">道02</div>
<svg style="left:116.9px;top:11.5px" width="43" height="43" viewBox="0 0 43 43"><rect x="0.7" y="0.7" width="41.6" height="41.6" rx="3" fill="#dedede" stroke="#8d9ca6" stroke-width="1.3"/><path d="M9 20 H33" stroke="#c4c4c4" stroke-width="1"/><circle cx="37" cy="37" r="5.3" fill="#343b41"/><text x="37" y="39.3" text-anchor="middle" font-family="Liberation Sans" font-weight="bold" font-size="6.2" fill="#f4f4f4">51</text></svg>
<div class="t" style="left:108.4px;top:57.7px;width:60px;text-align:center;color:#6c7880">单向四车</div>
<div class="t" style="left:108.4px;top:69.7px;width:60px;text-align:center;color:#6c7880">道</div>
<svg style="left:170.2px;top:11.5px" width="43" height="43" viewBox="0 0 43 43"><rect x="0.7" y="0.7" width="41.6" height="41.6" rx="3" fill="#cfd2d4" stroke="#8d9ca6" stroke-width="1.3"/><g fill="none" stroke-width="0.8"><path d="M30 4 Q20 10 20 16 Q22 22 16 26 Q12 30 18 34 Q20 38 16 40" stroke="#8f86a8"/><path d="M24 8 Q12 12 13 20 Q14 26 22 30 Q24 34 18 38" stroke="#b39e94"/><path d="M12 16 L24 18 M14 24 L25 23 M18 30 L26 31" stroke="#a59cb6" stroke-width="0.5"/></g><circle cx="37" cy="37" r="5.3" fill="#343b41"/><text x="37" y="39.3" text-anchor="middle" font-family="Liberation Sans" font-weight="bold" font-size="6.2" fill="#f4f4f4">51</text></svg>
<div class="t" style="left:161.7px;top:57.7px;width:60px;text-align:center;color:#6c7880">亚琛02</div>
<svg style="left:223.6px;top:11.5px" width="43" height="43" viewBox="0 0 43 43"><rect x="0.7" y="0.7" width="41.6" height="41.6" rx="3" fill="#dedede" stroke="#8d9ca6" stroke-width="1.3"/><path d="M9 20 H33" stroke="#cfcfcf" stroke-width="0.8"/><circle cx="37" cy="37" r="5.3" fill="#343b41"/><text x="37" y="39.3" text-anchor="middle" font-family="Liberation Sans" font-weight="bold" font-size="6.2" fill="#f4f4f4">51</text></svg>
<div class="t" style="left:215.1px;top:57.7px;width:60px;text-align:center;color:#6c7880">单向三车</div>
<div class="t" style="left:215.1px;top:69.7px;width:60px;text-align:center;color:#6c7880">道</div>
<svg style="left:277.0px;top:11.5px" width="43" height="43" viewBox="0 0 43 43"><rect x="0.7" y="0.7" width="41.6" height="41.6" rx="3" fill="#d4d6d8" stroke="#8d9ca6" stroke-width="1.3"/><g fill="none" stroke-width="0.8"><g stroke="#a8927f"><path d="M4 26 L38 10 M6 32 L40 16 M10 38 L40 22 M4 20 L30 6"/><path d="M10 14 L16 36 M17 11 L23 34 M24 8 L30 31 M31 6 L37 27"/></g><g stroke="#7a6fb0"><path d="M6 22 L38 14 M12 34 L36 26 M20 6 L28 38" /></g></g><circle cx="37" cy="37" r="5.3" fill="#343b41"/><text x="37" y="39.3" text-anchor="middle" font-family="Liberation Sans" font-weight="bold" font-size="6.2" fill="#f4f4f4">51</text></svg>
<div class="t" style="left:268.5px;top:57.7px;width:60px;text-align:center;color:#6c7880">法兰克福</div>
<div class="t" style="left:268.5px;top:69.7px;width:60px;text-align:center;color:#6c7880">01</div>
<svg style="left:330.4px;top:11.5px" width="43" height="43" viewBox="0 0 43 43"><rect x="0.7" y="0.7" width="41.6" height="41.6" rx="3" fill="#d8d9dc" stroke="#8d9ca6" stroke-width="1.3"/><g fill="none" stroke="#8e8ed0" stroke-width="0.45"><path d="M2 6 H8 M2 10 H8 M2 14 H8 M2 18 H8 M2 22 H8 M2 26 H8 M34 8 H41 M34 12 H41 M34 16 H41 M34 20 H41 M34 24 H41 M13 12 H29 M13 16 H29 M13 20 H29 M13 24 H29 M13 28 H29 M21 10 V32"/></g><path d="M9 35 V12 Q9 4 21 4 Q33 4 33 12 V34" fill="none" stroke="#2e2e2e" stroke-width="3.4"/><path d="M9 35 Q9 39 14 39 H28" fill="none" stroke="#2e2e2e" stroke-width="3.4"/><rect x="6" y="29" width="6" height="11" fill="#8a7ab8" opacity="0.55"/><rect x="27" y="30" width="9" height="10" fill="#8a7ab8" opacity="0.55"/><circle cx="37" cy="37" r="5.3" fill="#343b41"/><text x="37" y="39.3" text-anchor="middle" font-family="Liberation Sans" font-weight="bold" font-size="6.2" fill="#f4f4f4">51</text></svg>
<div class="t" style="left:321.9px;top:57.7px;width:60px;text-align:center;color:#6c7880">3DGS_停</div>
<div class="t" style="left:321.9px;top:69.7px;width:60px;text-align:center;color:#6c7880">车场</div>
<svg style="left:383.8px;top:11.5px" width="43" height="43" viewBox="0 0 43 43"><rect x="0.7" y="0.7" width="41.6" height="41.6" rx="3" fill="#d7d9da" stroke="#8d9ca6" stroke-width="1.3"/><g stroke="#2e2e2e" fill="none"><path d="M12 2 Q19 12 19 40" stroke-width="2"/><path d="M1 22 L42 21" stroke-width="2.4"/><path d="M4 36 L38 35" stroke-width="1.3"/></g><circle cx="18.5" cy="21.5" r="1.6" fill="#8a7ab8"/><circle cx="19" cy="35.5" r="1.4" fill="#8a7ab8"/><rect x="8" y="20.5" width="2" height="2" fill="#8a7ab8"/><circle cx="37" cy="37" r="5.3" fill="#343b41"/><text x="37" y="39.3" text-anchor="middle" font-family="Liberation Sans" font-weight="bold" font-size="6.2" fill="#f4f4f4">51</text></svg>
<div class="t" style="left:375.3px;top:57.7px;width:60px;text-align:center;color:#6c7880">3DGS_十</div>
<div class="t" style="left:375.3px;top:69.7px;width:60px;text-align:center;color:#6c7880">字路口01</div>
<svg style="left:437.1px;top:11.5px" width="43" height="43" viewBox="0 0 43 43"><rect x="0.7" y="0.7" width="41.6" height="41.6" rx="3" fill="#d5d7d8" stroke="#8d9ca6" stroke-width="1.3"/><path d="M22.4 1.5 V16 H26" stroke="#2a2a2a" stroke-width="1.4" fill="none"/><path d="M4 40.3 H29" stroke="#2a2a2a" stroke-width="1.4"/><g fill="#3d3a86"><rect x="25" y="14" width="11" height="5"/><rect x="24" y="20" width="12" height="5"/><rect x="25" y="26" width="11" height="5"/><rect x="24" y="32" width="12" height="7"/></g><g stroke="#9d9bd0" stroke-width="0.5"><path d="M25 16.5 H36 M24 22.5 H36 M25 28.5 H36 M24 35.5 H36"/></g><path d="M27 14 V39 M33 14 V39" stroke="#222" stroke-width="0.7"/><circle cx="37" cy="37" r="5.3" fill="#343b41"/><text x="37" y="39.3" text-anchor="middle" font-family="Liberation Sans" font-weight="bold" font-size="6.2" fill="#f4f4f4">51</text></svg>
<div class="t" style="left:428.6px;top:57.7px;width:60px;text-align:center;color:#6c7880">地下停车</div>
<div class="t" style="left:428.6px;top:69.7px;width:60px;text-align:center;color:#6c7880">场</div>
<svg style="left:490.5px;top:11.5px" width="43" height="43" viewBox="0 0 43 43"><rect x="0.7" y="0.7" width="41.6" height="41.6" rx="3" fill="#d2d4d6" stroke="#8d9ca6" stroke-width="1.3"/><path d="M9 30 V16 Q9 10 15 10 H38 V15 L21 36 H10" stroke="#555" stroke-width="1" fill="none"/><path d="M12 11 H38 V14 L28 20 L16 25 L12 24Z" fill="#6d6bbb" opacity="0.75"/><g fill="none" stroke="#6a68b0" stroke-width="0.7"><circle cx="28" cy="10.5" r="1.6"/><circle cx="35" cy="11" r="1.6"/><path d="M11 18 H15 M11 22 H15 M7 30 H12"/></g><circle cx="37" cy="37" r="5.3" fill="#343b41"/><text x="37" y="39.3" text-anchor="middle" font-family="Liberation Sans" font-weight="bold" font-size="6.2" fill="#f4f4f4">51</text></svg>
<div class="t" style="left:482.0px;top:57.7px;width:60px;text-align:center;color:#6c7880">地面停车</div>
<div class="t" style="left:482.0px;top:69.7px;width:60px;text-align:center;color:#6c7880">场</div>
<svg style="left:543.9px;top:11.5px" width="43" height="43" viewBox="0 0 43 43"><rect x="0.7" y="0.7" width="41.6" height="41.6" rx="3" fill="#dedede" stroke="#8d9ca6" stroke-width="1.3"/><path d="M16 5 V37 M16 20.5 H29" stroke="#8f8f8f" stroke-width="1"/><path d="M16 17 Q12 18 12.5 20.5 Q13 23 16 23" stroke="#9a9a9a" stroke-width="0.6" fill="none"/><circle cx="37" cy="37" r="5.3" fill="#343b41"/><text x="37" y="39.3" text-anchor="middle" font-family="Liberation Sans" font-weight="bold" font-size="6.2" fill="#f4f4f4">51</text></svg>
<div class="t" style="left:535.4px;top:57.7px;width:60px;text-align:center;color:#6c7880">城市高速</div>
<div class="t" style="left:535.4px;top:69.7px;width:60px;text-align:center;color:#6c7880">路</div>
<svg style="left:597.3px;top:11.5px" width="43" height="43" viewBox="0 0 43 43"><rect x="0.7" y="0.7" width="41.6" height="41.6" rx="3" fill="#dedede" stroke="#8d9ca6" stroke-width="1.3"/><path d="M9 20 H33" stroke="#cbbfbd" stroke-width="0.7"/><circle cx="20" cy="20" r="0.8" fill="#bbb"/><circle cx="37" cy="37" r="5.3" fill="#343b41"/><text x="37" y="39.3" text-anchor="middle" font-family="Liberation Sans" font-weight="bold" font-size="6.2" fill="#f4f4f4">51</text></svg>
<div class="t" style="left:588.8px;top:57.7px;width:60px;text-align:center;color:#6c7880">两车道环</div>
<div class="t" style="left:588.8px;top:69.7px;width:60px;text-align:center;color:#6c7880">形路口</div>
<svg style="left:650.7px;top:11.5px" width="43" height="43" viewBox="0 0 43 43"><rect x="0.7" y="0.7" width="41.6" height="41.6" rx="3" fill="#dedede" stroke="#8d9ca6" stroke-width="1.3"/><path d="M9 20 H33 M20 17 V23" stroke="#b6aca6" stroke-width="1"/><circle cx="37" cy="37" r="5.3" fill="#343b41"/><text x="37" y="39.3" text-anchor="middle" font-family="Liberation Sans" font-weight="bold" font-size="6.2" fill="#f4f4f4">51</text></svg>
<div class="t" style="left:642.2px;top:57.7px;width:60px;text-align:center;color:#6c7880">五车道路</div>
<div class="t" style="left:642.2px;top:69.7px;width:60px;text-align:center;color:#6c7880">口</div>
<svg style="left:704.0px;top:11.5px" width="43" height="43" viewBox="0 0 43 43"><rect x="0.7" y="0.7" width="41.6" height="41.6" rx="3" fill="#dedede" stroke="#8d9ca6" stroke-width="1.3"/><path d="M9 20 H33 M20 16 V24" stroke="#c5beb8" stroke-width="0.9"/><circle cx="37" cy="37" r="5.3" fill="#343b41"/><text x="37" y="39.3" text-anchor="middle" font-family="Liberation Sans" font-weight="bold" font-size="6.2" fill="#f4f4f4">51</text></svg>
<div class="t" style="left:695.5px;top:57.7px;width:60px;text-align:center;color:#6c7880">三车道路</div>
<div class="t" style="left:695.5px;top:69.7px;width:60px;text-align:center;color:#6c7880">口</div>
<svg style="left:757.4px;top:11.5px" width="43" height="43" viewBox="0 0 43 43"><rect x="0.7" y="0.7" width="41.6" height="41.6" rx="3" fill="#dedede" stroke="#8d9ca6" stroke-width="1.3"/><path d="M9 20.5 H33" stroke="#bfb2ac" stroke-width="1"/><circle cx="21" cy="20.5" r="1" fill="#8a8a8a"/><circle cx="37" cy="37" r="5.3" fill="#343b41"/><text x="37" y="39.3" text-anchor="middle" font-family="Liberation Sans" font-weight="bold" font-size="6.2" fill="#f4f4f4">51</text></svg>
<div class="t" style="left:748.9px;top:57.7px;width:60px;text-align:center;color:#6c7880">四车道路</div>
<div class="t" style="left:748.9px;top:69.7px;width:60px;text-align:center;color:#6c7880">口</div>
<svg style="left:10.1px;top:87.5px" width="43" height="43" viewBox="0 0 43 43"><rect x="0.7" y="0.7" width="41.6" height="41.6" rx="3" fill="#dedede" stroke="#8d9ca6" stroke-width="1.3"/><path d="M8 18 H32 M20 18 V23" stroke="#c7b9b3" stroke-width="0.9"/><circle cx="37" cy="37" r="5.3" fill="#343b41"/><text x="37" y="39.3" text-anchor="middle" font-family="Liberation Sans" font-weight="bold" font-size="6.2" fill="#f4f4f4">51</text></svg>
<div class="t" style="left:1.6px;top:133.7px;width:60px;text-align:center;color:#6c7880">四车道T字</div>
<svg style="left:63.5px;top:87.5px" width="43" height="43" viewBox="0 0 43 43"><rect x="0.7" y="0.7" width="41.6" height="41.6" rx="3" fill="#dedede" stroke="#8d9ca6" stroke-width="1.3"/><path d="M14 4 Q15 16 18 24 Q23 34 27 40" stroke="#bdbdbd" stroke-width="0.8" fill="none"/><circle cx="37" cy="37" r="5.3" fill="#343b41"/><text x="37" y="39.3" text-anchor="middle" font-family="Liberation Sans" font-weight="bold" font-size="6.2" fill="#f4f4f4">51</text></svg>
<div class="t" style="left:55.0px;top:133.7px;width:60px;text-align:center;color:#6c7880">双向六车</div>
<svg style="left:116.9px;top:87.5px" width="43" height="43" viewBox="0 0 43 43"><rect x="0.7" y="0.7" width="41.6" height="41.6" rx="3" fill="#cdd0d2" stroke="#8d9ca6" stroke-width="1.3"/><path d="M2 20 H41" stroke="#9a9a9a" stroke-width="1.2"/><path d="M21 14 V26" stroke="#9a9a9a" stroke-width="0.8"/><circle cx="37" cy="37" r="5.3" fill="#343b41"/><text x="37" y="39.3" text-anchor="middle" font-family="Liberation Sans" font-weight="bold" font-size="6.2" fill="#f4f4f4">51</text></svg>
<div class="t" style="left:108.4px;top:133.7px;width:60px;text-align:center;color:#6c7880">六车道环</div>
<svg style="left:170.2px;top:87.5px" width="43" height="43" viewBox="0 0 43 43"><rect x="0.7" y="0.7" width="41.6" height="41.6" rx="3" fill="#d5d7d8" stroke="#8d9ca6" stroke-width="1.3"/><path d="M1 20 Q10 18 18 22 Q28 24 40 16" stroke="#bcbcbc" stroke-width="0.7" fill="none"/><circle cx="37" cy="37" r="5.3" fill="#343b41"/><text x="37" y="39.3" text-anchor="middle" font-family="Liberation Sans" font-weight="bold" font-size="6.2" fill="#f4f4f4">51</text></svg>
<div class="t" style="left:161.7px;top:133.7px;width:60px;text-align:center;color:#6c7880">双向四车</div>
<svg style="left:223.6px;top:87.5px" width="43" height="43" viewBox="0 0 43 43"><rect x="0.7" y="0.7" width="41.6" height="41.6" rx="3" fill="#d4d6d8" stroke="#8d9ca6" stroke-width="1.3"/><path d="M2 28 Q20 20 30 18 Q38 17 40 12" stroke="#b0b0b0" stroke-width="0.9" fill="none"/><circle cx="37" cy="37" r="5.3" fill="#343b41"/><text x="37" y="39.3" text-anchor="middle" font-family="Liberation Sans" font-weight="bold" font-size="6.2" fill="#f4f4f4">51</text></svg>
<div class="t" style="left:215.1px;top:133.7px;width:60px;text-align:center;color:#6c7880">双向四车</div>
<svg style="left:277.0px;top:87.5px" width="43" height="43" viewBox="0 0 43 43"><rect x="0.7" y="0.7" width="41.6" height="41.6" rx="3" fill="#dedede" stroke="#8d9ca6" stroke-width="1.3"/><path d="M18 5 Q22 12 19 22 Q19 32 21 37" stroke="#bbb" stroke-width="0.8" fill="none"/><circle cx="37" cy="37" r="5.3" fill="#343b41"/><text x="37" y="39.3" text-anchor="middle" font-family="Liberation Sans" font-weight="bold" font-size="6.2" fill="#f4f4f4">51</text></svg>
<div class="t" style="left:268.5px;top:133.7px;width:60px;text-align:center;color:#6c7880">双向八车</div>
<svg style="left:330.4px;top:87.5px" width="43" height="43" viewBox="0 0 43 43"><rect x="0.7" y="0.7" width="41.6" height="41.6" rx="3" fill="#dedede" stroke="#8d9ca6" stroke-width="1.3"/><path d="M9 20 H33 M20 17 V23" stroke="#b6aca6" stroke-width="1"/><circle cx="37" cy="37" r="5.3" fill="#343b41"/><text x="37" y="39.3" text-anchor="middle" font-family="Liberation Sans" font-weight="bold" font-size="6.2" fill="#f4f4f4">51</text></svg>
<div class="t" style="left:321.9px;top:133.7px;width:60px;text-align:center;color:#6c7880">八车道六</div>
<svg style="left:383.8px;top:87.5px" width="43" height="43" viewBox="0 0 43 43"><rect x="0.7" y="0.7" width="41.6" height="41.6" rx="3" fill="#dedede" stroke="#8d9ca6" stroke-width="1.3"/><path d="M8 20 H34" stroke="#d2d2d2" stroke-width="0.8"/><circle cx="37" cy="37" r="5.3" fill="#343b41"/><text x="37" y="39.3" text-anchor="middle" font-family="Liberation Sans" font-weight="bold" font-size="6.2" fill="#f4f4f4">51</text></svg>
<div class="t" style="left:375.3px;top:133.7px;width:60px;text-align:center;color:#6c7880">三车道</div>
<svg style="left:437.1px;top:87.5px" width="43" height="43" viewBox="0 0 43 43"><rect x="0.7" y="0.7" width="41.6" height="41.6" rx="3" fill="#dedede" stroke="#8d9ca6" stroke-width="1.3"/><path d="M9 20 H33" stroke="#cbbfbd" stroke-width="0.7"/><circle cx="20" cy="20" r="0.8" fill="#bbb"/><circle cx="37" cy="37" r="5.3" fill="#343b41"/><text x="37" y="39.3" text-anchor="middle" font-family="Liberation Sans" font-weight="bold" font-size="6.2" fill="#f4f4f4">51</text></svg>
<div class="t" style="left:428.6px;top:133.7px;width:60px;text-align:center;color:#6c7880">两车道路</div>
<svg style="left:490.5px;top:87.5px" width="43" height="43" viewBox="0 0 43 43"><rect x="0.7" y="0.7" width="41.6" height="41.6" rx="3" fill="#dedede" stroke="#8d9ca6" stroke-width="1.3"/><path d="M9 20 H33" stroke="#cfcfcf" stroke-width="0.8"/><circle cx="37" cy="37" r="5.3" fill="#343b41"/><text x="37" y="39.3" text-anchor="middle" font-family="Liberation Sans" font-weight="bold" font-size="6.2" fill="#f4f4f4">51</text></svg>
<div class="t" style="left:482.0px;top:133.7px;width:60px;text-align:center;color:#6c7880">带应急单</div>
<svg style="left:543.9px;top:87.5px" width="43" height="43" viewBox="0 0 43 43"><rect x="0.7" y="0.7" width="41.6" height="41.6" rx="3" fill="#dedede" stroke="#8d9ca6" stroke-width="1.3"/><path d="M8 20 H34" stroke="#d2d2d2" stroke-width="0.8"/><circle cx="37" cy="37" r="5.3" fill="#343b41"/><text x="37" y="39.3" text-anchor="middle" font-family="Liberation Sans" font-weight="bold" font-size="6.2" fill="#f4f4f4">51</text></svg>
<div class="t" style="left:535.4px;top:133.7px;width:60px;text-align:center;color:#6c7880">带绿带单</div>
<svg style="left:597.3px;top:87.5px" width="43" height="43" viewBox="0 0 43 43"><rect x="0.7" y="0.7" width="41.6" height="41.6" rx="3" fill="#dedede" stroke="#8d9ca6" stroke-width="1.3"/><path d="M17 2 L23 40" stroke="#7a6558" stroke-width="1.6"/><path d="M9 33 L27 30" stroke="#7a6558" stroke-width="1.6"/><circle cx="37" cy="37" r="5.3" fill="#343b41"/><text x="37" y="39.3" text-anchor="middle" font-family="Liberation Sans" font-weight="bold" font-size="6.2" fill="#f4f4f4">51</text></svg>
<div class="t" style="left:588.8px;top:133.7px;width:60px;text-align:center;color:#6c7880">fabriksgat</div>
<svg style="left:650.7px;top:87.5px" width="43" height="43" viewBox="0 0 43 43"><rect x="0.7" y="0.7" width="41.6" height="41.6" rx="3" fill="#dedede" stroke="#8d9ca6" stroke-width="1.3"/><path d="M9 20 H33" stroke="#cfcfcf" stroke-width="0.8"/><circle cx="37" cy="37" r="5.3" fill="#343b41"/><text x="37" y="39.3" text-anchor="middle" font-family="Liberation Sans" font-weight="bold" font-size="6.2" fill="#f4f4f4">51</text></svg>
<div class="t" style="left:642.2px;top:133.7px;width:60px;text-align:center;color:#6c7880">带人行道</div>
<svg style="left:704.0px;top:87.5px" width="43" height="43" viewBox="0 0 43 43"><rect x="0.7" y="0.7" width="41.6" height="41.6" rx="3" fill="#dedede" stroke="#8d9ca6" stroke-width="1.3"/><path d="M9 20 H33" stroke="#cfcfcf" stroke-width="0.8"/><circle cx="37" cy="37" r="5.3" fill="#343b41"/><text x="37" y="39.3" text-anchor="middle" font-family="Liberation Sans" font-weight="bold" font-size="6.2" fill="#f4f4f4">51</text></svg>
<div class="t" style="left:695.5px;top:133.7px;width:60px;text-align:center;color:#6c7880">限速单向</div>
<svg style="left:757.4px;top:87.5px" width="43" height="43" viewBox="0 0 43 43"><rect x="0.7" y="0.7" width="41.6" height="41.6" rx="3" fill="#dedede" stroke="#8d9ca6" stroke-width="1.3"/><path d="M9 20 H33" stroke="#cfcfcf" stroke-width="0.8"/><circle cx="37" cy="37" r="5.3" fill="#343b41"/><text x="37" y="39.3" text-anchor="middle" font-family="Liberation Sans" font-weight="bold" font-size="6.2" fill="#f4f4f4">51</text></svg>
<div class="t" style="left:748.9px;top:133.7px;width:60px;text-align:center;color:#6c7880">带交通灯</div>
</div>
<div class="a" style="left:1003.5px;top:484px;width:3.6px;height:137px;background:#f0f0f0;"></div>
<div class="a" style="left:1003.5px;top:486.5px;width:3.6px;height:78px;background:#c9cbcd;border-radius:1.8px"></div>
<svg style="left:485.5px;top:630.3px;" width="10" height="8" viewBox="0 0 10 8"><path d="M1 0 V8" stroke="#c3c8cc" stroke-width="1"/><path d="M8 0.5 L4 4 L8 7.5" fill="none" stroke="#c3c8cc" stroke-width="1"/></svg>
<svg style="left:512.5px;top:630.3px;" width="6" height="8" viewBox="0 0 6 8"><path d="M5 0.5 L1.5 4 L5 7.5" fill="none" stroke="#c3c8cc" stroke-width="1"/></svg>
<div class="a" style="left:530px;top:623.5px;width:21.5px;height:21.5px;border-radius:50%;background:#dcdcdc"></div>
<div class="t" style="left:537.0px;top:628.9px;color:#7a858d;font-size:10px;">1</div>
<div class="t" style="left:562.5px;top:628.9px;color:#5b6770;font-size:10px;">2</div>
<svg style="left:588.5px;top:630.3px;" width="6" height="8" viewBox="0 0 6 8"><path d="M1 0.5 L4.5 4 L1 7.5" fill="none" stroke="#5b6770" stroke-width="1.1"/></svg>
<svg style="left:613px;top:630.3px;" width="10" height="8" viewBox="0 0 10 8"><path d="M1 0.5 L4.5 4 L1 7.5" fill="none" stroke="#5b6770" stroke-width="1.1"/><path d="M7.5 0 V8" stroke="#5b6770" stroke-width="1.1"/></svg>
<div class="t" style="left:641.2px;top:629.0px;color:#5b6770;">跳转至</div>
<div class="a" style="left:676.2px;top:625.3px;width:32.4px;height:16.8px;border:1px solid #dedede;border-radius:2px"></div>
<div class="t" style="left:681.0px;top:628.8px;color:#5b6770;font-size:9.5px;">1</div>
<div class="t" style="left:712.5px;top:629.0px;color:#5b6770;">页</div>
<div class="a" style="left:1013.6px;top:23px;width:1px;height:630px;background:#e4e4e4;"></div>
<div class="t" style="left:1023.8px;top:29.1px;color:#4f5b64;-webkit-text-stroke:0.22px currentColor;">地图参数设置</div>
<div class="a" style="left:1014.6px;top:44px;width:266px;height:1px;background:#ebebeb;"></div>
<div class="t" style="left:1023.8px;top:49.3px;color:#5b6770;">自动生成道路周边场景</div>
<div class="a" style="left:1117px;top:50.1px;width:25px;height:9px;background:#9d9d9d;border-radius:5px"></div>
<div class="a" style="left:1116px;top:48.7px;width:12px;height:12px;border-radius:50%;background:#fff;box-shadow:0 0.5px 1.5px rgba(0,0,0,.35)"></div>
<div class="a" style="left:1014.6px;top:64.3px;width:266px;height:1px;background:#ebebeb;"></div>
<div class="t" style="left:1023.8px;top:74.7px;color:#5b6770;">全局交通灯控制方式</div>
<div class="a" style="left:1165.3px;top:70.5px;width:103.5px;height:18.2px;border:1px solid #dcdcdc;border-radius:2px;background:#f2f2f2"></div>
<div class="t" style="left:1170.5px;top:74.3px;color:#5b6770;">手动设置交通灯时序</div>
<svg style="left:1257px;top:78px;" width="8" height="4" viewBox="0 0 8 4"><path d="M0 0 H7.4 L3.7 3.7Z" fill="#4d5860"/></svg>
<div class="a" style="left:1020.5px;top:101.2px;width:252.5px;height:23px;background:#f8f8f8;"></div>
<div class="a" style="left:1020.5px;top:124px;width:252.5px;height:1.3px;background:#e8e8e8;"></div>
<svg style="left:1035px;top:109.5px;" width="9" height="6" viewBox="0 0 9 6"><path d="M0.8 0.8 L4.3 4.5 L7.8 0.8" fill="none" stroke="#4f5b64" stroke-width="1.3"/></svg>
<div class="t" style="left:1046.5px;top:107.7px;color:#5b6770;font-size:10px;">Juction: 96 (6)</div>
<div class="a" style="left:1021px;top:130.5px;width:252px;height:197px;overflow:hidden">
<div class="a" style="left:0.0px;top:-0.3px;width:260px;height:1px;background:#e4e4e4;"></div>
<div class="a" style="left:0.0px;top:19.4px;width:260px;height:1px;background:#e4e4e4;"></div>
<div class="a" style="left:0.0px;top:44.5px;width:260px;height:1px;background:#e4e4e4;"></div>
<div class="a" style="left:0.0px;top:69.6px;width:260px;height:1px;background:#e4e4e4;"></div>
<div class="a" style="left:0.0px;top:94.7px;width:260px;height:1px;background:#e4e4e4;"></div>
<div class="a" style="left:0.0px;top:119.8px;width:260px;height:1px;background:#e4e4e4;"></div>
<div class="a" style="left:0.0px;top:144.9px;width:260px;height:1px;background:#e4e4e4;"></div>
<div class="a" style="left:0.0px;top:170.0px;width:260px;height:1px;background:#e4e4e4;"></div>
<div class="a" style="left:0.0px;top:195.1px;width:260px;height:1px;background:#e4e4e4;"></div>
<div class="a" style="left:-0.5px;top:0.2px;width:1px;height:196px;background:#e4e4e4;"></div>
<div class="a" style="left:59.2px;top:0.2px;width:1px;height:196px;background:#e4e4e4;"></div>
<div class="a" style="left:105.0px;top:0.2px;width:1px;height:196px;background:#e4e4e4;"></div>
<div class="a" style="left:155.2px;top:0.2px;width:1px;height:196px;background:#e4e4e4;"></div>
<div class="a" style="left:204.7px;top:0.2px;width:1px;height:196px;background:#e4e4e4;"></div>
<div class="a" style="left:255.0px;top:0.2px;width:1px;height:196px;background:#e4e4e4;"></div>
<div class="t" style="left:2.0px;top:4.6px;color:#6c7880;">时序</div>
<svg style="left:62.4px;top:5.3px" width="10" height="10" viewBox="0 0 10 10"><circle cx="5" cy="5" r="4.5" fill="none" stroke="#7a858d" stroke-width="0.9"/><path d="M5 7.8 V2.6 M3 4.5 L5 2.4 L7 4.5" fill="none" stroke="#7a858d" stroke-width="0.9"/></svg>
<div class="t" style="left:72.6px;top:4.5px;color:#7a858d;font-size:8.5px;">ID:3</div>
<svg style="left:91.3px;top:5.5px" width="8" height="10" viewBox="0 0 8 10"><path d="M4 9.6 C2.5 7.6 0.5 5.8 0.5 3.7 A3.5 3.5 0 0 1 7.5 3.7 C7.5 5.8 5.5 7.6 4 9.6Z" fill="none" stroke="#2d87e6" stroke-width="1"/><circle cx="4" cy="3.7" r="1.2" fill="#2d87e6"/></svg>
<svg style="left:108.6px;top:5.3px" width="10" height="10" viewBox="0 0 10 10"><circle cx="5" cy="5" r="4.5" fill="none" stroke="#7a858d" stroke-width="0.9"/><path d="M5 7.8 V2.6 M3 4.5 L5 2.4 L7 4.5" fill="none" stroke="#7a858d" stroke-width="0.9"/></svg>
<div class="t" style="left:118.8px;top:4.5px;color:#7a858d;font-size:8.5px;">ID:91</div>
<svg style="left:142.0px;top:5.5px" width="8" height="10" viewBox="0 0 8 10"><path d="M4 9.6 C2.5 7.6 0.5 5.8 0.5 3.7 A3.5 3.5 0 0 1 7.5 3.7 C7.5 5.8 5.5 7.6 4 9.6Z" fill="none" stroke="#7a858d" stroke-width="1"/><circle cx="4" cy="3.7" r="1.2" fill="#7a858d"/></svg>
<svg style="left:158.8px;top:5.3px" width="10" height="10" viewBox="0 0 10 10"><circle cx="5" cy="5" r="4.5" fill="none" stroke="#7a858d" stroke-width="0.9"/><path d="M5 7.8 V2.6 M3 4.5 L5 2.4 L7 4.5" fill="none" stroke="#7a858d" stroke-width="0.9"/></svg>
<div class="t" style="left:169.0px;top:4.5px;color:#7a858d;font-size:8.5px;">ID:76</div>
<svg style="left:192.0px;top:5.5px" width="8" height="10" viewBox="0 0 8 10"><path d="M4 9.6 C2.5 7.6 0.5 5.8 0.5 3.7 A3.5 3.5 0 0 1 7.5 3.7 C7.5 5.8 5.5 7.6 4 9.6Z" fill="none" stroke="#7a858d" stroke-width="1"/><circle cx="4" cy="3.7" r="1.2" fill="#7a858d"/></svg>
<svg style="left:208.8px;top:5.3px" width="10" height="10" viewBox="0 0 10 10"><circle cx="5" cy="5" r="4.5" fill="none" stroke="#7a858d" stroke-width="0.9"/><path d="M5 7.8 V2.6 M3 4.5 L5 2.4 L7 4.5" fill="none" stroke="#7a858d" stroke-width="0.9"/></svg>
<div class="t" style="left:219.0px;top:4.5px;color:#7a858d;font-size:8.5px;">ID:106</div>
<svg style="left:246.4px;top:5.5px" width="8" height="10" viewBox="0 0 8 10"><path d="M4 9.6 C2.5 7.6 0.5 5.8 0.5 3.7 A3.5 3.5 0 0 1 7.5 3.7 C7.5 5.8 5.5 7.6 4 9.6Z" fill="none" stroke="#7a858d" stroke-width="1"/><circle cx="4" cy="3.7" r="1.2" fill="#7a858d"/></svg>
<svg style="left:4px;top:27.9px" width="11.2" height="11.2" viewBox="0 0 11.2 11.2"><circle cx="5.6" cy="5.6" r="5" fill="none" stroke="#7a858d" stroke-width="1"/><path d="M3 5.6 H8.2" stroke="#7a858d" stroke-width="1"/></svg>
<div class="a" style="left:16.4px;top:22.7px;width:39.6px;height:19.8px;background:#fff;border:1px solid #e6e6e6;border-radius:3px"></div>
<div class="t" style="left:20.3px;top:28.4px;color:#6c7880;font-size:10.5px;">10</div>
<div class="t" style="left:45.0px;top:28.6px;color:#8a949b;font-size:10px;">s</div>
<div class="a" style="left:62.8px;top:22.7px;width:39.4px;height:19.8px;background:#fff;border:1px solid #e6e6e6;border-radius:3px"></div>
<div class="t" style="left:67.4px;top:27.0px;color:#7a858d;">绿</div>
<svg style="left:90.6px;top:31.3px" width="7" height="4" viewBox="0 0 7 4"><path d="M0 0 H6.2 L3.1 3.2Z" fill="#4d5860"/></svg>
<div class="a" style="left:108.8px;top:22.7px;width:39.4px;height:19.8px;background:#fff;border:1px solid #e6e6e6;border-radius:3px"></div>
<div class="t" style="left:113.4px;top:27.0px;color:#7a858d;">绿</div>
<svg style="left:136.6px;top:31.3px" width="7" height="4" viewBox="0 0 7 4"><path d="M0 0 H6.2 L3.1 3.2Z" fill="#4d5860"/></svg>
<div class="a" style="left:158.4px;top:22.7px;width:39.4px;height:19.8px;background:#fff;border:1px solid #e6e6e6;border-radius:3px"></div>
<div class="t" style="left:163.0px;top:27.0px;color:#7a858d;">绿</div>
<svg style="left:186.2px;top:31.3px" width="7" height="4" viewBox="0 0 7 4"><path d="M0 0 H6.2 L3.1 3.2Z" fill="#4d5860"/></svg>
<div class="a" style="left:208.4px;top:22.7px;width:39.4px;height:19.8px;background:#fff;border:1px solid #e6e6e6;border-radius:3px"></div>
<div class="t" style="left:213.0px;top:27.0px;color:#7a858d;">绿</div>
<svg style="left:236.2px;top:31.3px" width="7" height="4" viewBox="0 0 7 4"><path d="M0 0 H6.2 L3.1 3.2Z" fill="#4d5860"/></svg>
<svg style="left:4px;top:53.0px" width="11.2" height="11.2" viewBox="0 0 11.2 11.2"><circle cx="5.6" cy="5.6" r="5" fill="none" stroke="#7a858d" stroke-width="1"/><path d="M3 5.6 H8.2" stroke="#7a858d" stroke-width="1"/></svg>
<div class="a" style="left:16.4px;top:47.8px;width:39.6px;height:19.8px;background:#fff;border:1px solid #e6e6e6;border-radius:3px"></div>
<div class="t" style="left:20.3px;top:53.5px;color:#6c7880;font-size:10.5px;">10</div>
<div class="t" style="left:45.0px;top:53.7px;color:#8a949b;font-size:10px;">s</div>
<div class="a" style="left:62.8px;top:47.8px;width:39.4px;height:19.8px;background:#fff;border:1px solid #e6e6e6;border-radius:3px"></div>
<div class="t" style="left:67.4px;top:52.1px;color:#7a858d;">绿闪</div>
<svg style="left:90.6px;top:56.4px" width="7" height="4" viewBox="0 0 7 4"><path d="M0 0 H6.2 L3.1 3.2Z" fill="#4d5860"/></svg>
<div class="a" style="left:108.8px;top:47.8px;width:39.4px;height:19.8px;background:#fff;border:1px solid #e6e6e6;border-radius:3px"></div>
<div class="t" style="left:113.4px;top:52.1px;color:#7a858d;">绿闪</div>
<svg style="left:136.6px;top:56.4px" width="7" height="4" viewBox="0 0 7 4"><path d="M0 0 H6.2 L3.1 3.2Z" fill="#4d5860"/></svg>
<div class="a" style="left:158.4px;top:47.8px;width:39.4px;height:19.8px;background:#fff;border:1px solid #e6e6e6;border-radius:3px"></div>
<div class="t" style="left:163.0px;top:52.1px;color:#7a858d;">绿闪</div>
<svg style="left:186.2px;top:56.4px" width="7" height="4" viewBox="0 0 7 4"><path d="M0 0 H6.2 L3.1 3.2Z" fill="#4d5860"/></svg>
<div class="a" style="left:208.4px;top:47.8px;width:39.4px;height:19.8px;background:#fff;border:1px solid #e6e6e6;border-radius:3px"></div>
<div class="t" style="left:213.0px;top:52.1px;color:#7a858d;">绿闪</div>
<svg style="left:236.2px;top:56.4px" width="7" height="4" viewBox="0 0 7 4"><path d="M0 0 H6.2 L3.1 3.2Z" fill="#4d5860"/></svg>
<svg style="left:4px;top:78.1px" width="11.2" height="11.2" viewBox="0 0 11.2 11.2"><circle cx="5.6" cy="5.6" r="5" fill="none" stroke="#7a858d" stroke-width="1"/><path d="M3 5.6 H8.2" stroke="#7a858d" stroke-width="1"/></svg>
<div class="a" style="left:16.4px;top:72.9px;width:39.6px;height:19.8px;background:#fff;border:1px solid #e6e6e6;border-radius:3px"></div>
<div class="t" style="left:20.3px;top:78.6px;color:#6c7880;font-size:10.5px;">10</div>
<div class="t" style="left:45.0px;top:78.8px;color:#8a949b;font-size:10px;">s</div>
<div class="a" style="left:62.8px;top:72.9px;width:39.4px;height:19.8px;background:#fff;border:1px solid #e6e6e6;border-radius:3px"></div>
<div class="t" style="left:67.4px;top:77.2px;color:#7a858d;">黄</div>
<svg style="left:90.6px;top:81.5px" width="7" height="4" viewBox="0 0 7 4"><path d="M0 0 H6.2 L3.1 3.2Z" fill="#4d5860"/></svg>
<div class="a" style="left:108.8px;top:72.9px;width:39.4px;height:19.8px;background:#fff;border:1px solid #e6e6e6;border-radius:3px"></div>
<div class="t" style="left:113.4px;top:77.2px;color:#7a858d;">黄</div>
<svg style="left:136.6px;top:81.5px" width="7" height="4" viewBox="0 0 7 4"><path d="M0 0 H6.2 L3.1 3.2Z" fill="#4d5860"/></svg>
<div class="a" style="left:158.4px;top:72.9px;width:39.4px;height:19.8px;background:#fff;border:1px solid #e6e6e6;border-radius:3px"></div>
<div class="t" style="left:163.0px;top:77.2px;color:#7a858d;">黄</div>
<svg style="left:186.2px;top:81.5px" width="7" height="4" viewBox="0 0 7 4"><path d="M0 0 H6.2 L3.1 3.2Z" fill="#4d5860"/></svg>
<div class="a" style="left:208.4px;top:72.9px;width:39.4px;height:19.8px;background:#fff;border:1px solid #e6e6e6;border-radius:3px"></div>
<div class="t" style="left:213.0px;top:77.2px;color:#7a858d;">黄</div>
<svg style="left:236.2px;top:81.5px" width="7" height="4" viewBox="0 0 7 4"><path d="M0 0 H6.2 L3.1 3.2Z" fill="#4d5860"/></svg>
<svg style="left:4px;top:103.2px" width="11.2" height="11.2" viewBox="0 0 11.2 11.2"><circle cx="5.6" cy="5.6" r="5" fill="none" stroke="#7a858d" stroke-width="1"/><path d="M3 5.6 H8.2" stroke="#7a858d" stroke-width="1"/></svg>
<div class="a" style="left:16.4px;top:98.0px;width:39.6px;height:19.8px;background:#fff;border:1px solid #e6e6e6;border-radius:3px"></div>
<div class="t" style="left:20.3px;top:103.7px;color:#6c7880;font-size:10.5px;">10</div>
<div class="t" style="left:45.0px;top:103.9px;color:#8a949b;font-size:10px;">s</div>
<div class="a" style="left:62.8px;top:98.0px;width:39.4px;height:19.8px;background:#fff;border:1px solid #e6e6e6;border-radius:3px"></div>
<div class="t" style="left:67.4px;top:102.3px;color:#7a858d;">黄闪</div>
<svg style="left:90.6px;top:106.6px" width="7" height="4" viewBox="0 0 7 4"><path d="M0 0 H6.2 L3.1 3.2Z" fill="#4d5860"/></svg>
<div class="a" style="left:108.8px;top:98.0px;width:39.4px;height:19.8px;background:#fff;border:1px solid #e6e6e6;border-radius:3px"></div>
<div class="t" style="left:113.4px;top:102.3px;color:#7a858d;">黄闪</div>
<svg style="left:136.6px;top:106.6px" width="7" height="4" viewBox="0 0 7 4"><path d="M0 0 H6.2 L3.1 3.2Z" fill="#4d5860"/></svg>
<div class="a" style="left:158.4px;top:98.0px;width:39.4px;height:19.8px;background:#fff;border:1px solid #e6e6e6;border-radius:3px"></div>
<div class="t" style="left:163.0px;top:102.3px;color:#7a858d;">黄闪</div>
<svg style="left:186.2px;top:106.6px" width="7" height="4" viewBox="0 0 7 4"><path d="M0 0 H6.2 L3.1 3.2Z" fill="#4d5860"/></svg>
<div class="a" style="left:208.4px;top:98.0px;width:39.4px;height:19.8px;background:#fff;border:1px solid #e6e6e6;border-radius:3px"></div>
<div class="t" style="left:213.0px;top:102.3px;color:#7a858d;">黄闪</div>
<svg style="left:236.2px;top:106.6px" width="7" height="4" viewBox="0 0 7 4"><path d="M0 0 H6.2 L3.1 3.2Z" fill="#4d5860"/></svg>
<svg style="left:4px;top:128.3px" width="11.2" height="11.2" viewBox="0 0 11.2 11.2"><circle cx="5.6" cy="5.6" r="5" fill="none" stroke="#7a858d" stroke-width="1"/><path d="M3 5.6 H8.2" stroke="#7a858d" stroke-width="1"/></svg>
<div class="a" style="left:16.4px;top:123.1px;width:39.6px;height:19.8px;background:#fff;border:1px solid #e6e6e6;border-radius:3px"></div>
<div class="t" style="left:20.3px;top:128.8px;color:#6c7880;font-size:10.5px;">10</div>
<div class="t" style="left:45.0px;top:129.0px;color:#8a949b;font-size:10px;">s</div>
<div class="a" style="left:62.8px;top:123.1px;width:39.4px;height:19.8px;background:#fff;border:1px solid #e6e6e6;border-radius:3px"></div>
<div class="t" style="left:67.4px;top:127.4px;color:#7a858d;">红</div>
<svg style="left:90.6px;top:131.7px" width="7" height="4" viewBox="0 0 7 4"><path d="M0 0 H6.2 L3.1 3.2Z" fill="#4d5860"/></svg>
<div class="a" style="left:108.8px;top:123.1px;width:39.4px;height:19.8px;background:#fff;border:1px solid #e6e6e6;border-radius:3px"></div>
<div class="t" style="left:113.4px;top:127.4px;color:#7a858d;">红</div>
<svg style="left:136.6px;top:131.7px" width="7" height="4" viewBox="0 0 7 4"><path d="M0 0 H6.2 L3.1 3.2Z" fill="#4d5860"/></svg>
<div class="a" style="left:158.4px;top:123.1px;width:39.4px;height:19.8px;background:#fff;border:1px solid #e6e6e6;border-radius:3px"></div>
<div class="t" style="left:163.0px;top:127.4px;color:#7a858d;">红</div>
<svg style="left:186.2px;top:131.7px" width="7" height="4" viewBox="0 0 7 4"><path d="M0 0 H6.2 L3.1 3.2Z" fill="#4d5860"/></svg>
<div class="a" style="left:208.4px;top:123.1px;width:39.4px;height:19.8px;background:#fff;border:1px solid #e6e6e6;border-radius:3px"></div>
<div class="t" style="left:213.0px;top:127.4px;color:#7a858d;">红</div>
<svg style="left:236.2px;top:131.7px" width="7" height="4" viewBox="0 0 7 4"><path d="M0 0 H6.2 L3.1 3.2Z" fill="#4d5860"/></svg>
<svg style="left:4px;top:153.4px" width="11.2" height="11.2" viewBox="0 0 11.2 11.2"><circle cx="5.6" cy="5.6" r="5" fill="none" stroke="#7a858d" stroke-width="1"/><path d="M3 5.6 H8.2" stroke="#7a858d" stroke-width="1"/></svg>
<div class="a" style="left:16.4px;top:148.2px;width:39.6px;height:19.8px;background:#fff;border:1px solid #e6e6e6;border-radius:3px"></div>
<div class="t" style="left:20.3px;top:153.9px;color:#6c7880;font-size:10.5px;">10</div>
<div class="t" style="left:45.0px;top:154.1px;color:#8a949b;font-size:10px;">s</div>
<div class="a" style="left:62.8px;top:148.2px;width:39.4px;height:19.8px;background:#fff;border:1px solid #e6e6e6;border-radius:3px"></div>
<div class="t" style="left:67.4px;top:152.5px;color:#7a858d;">红闪</div>
<svg style="left:90.6px;top:156.8px" width="7" height="4" viewBox="0 0 7 4"><path d="M0 0 H6.2 L3.1 3.2Z" fill="#4d5860"/></svg>
<div class="a" style="left:108.8px;top:148.2px;width:39.4px;height:19.8px;background:#fff;border:1px solid #e6e6e6;border-radius:3px"></div>
<div class="t" style="left:113.4px;top:152.5px;color:#7a858d;">红闪</div>
<svg style="left:136.6px;top:156.8px" width="7" height="4" viewBox="0 0 7 4"><path d="M0 0 H6.2 L3.1 3.2Z" fill="#4d5860"/></svg>
<div class="a" style="left:158.4px;top:148.2px;width:39.4px;height:19.8px;background:#fff;border:1px solid #e6e6e6;border-radius:3px"></div>
<div class="t" style="left:163.0px;top:152.5px;color:#7a858d;">红闪</div>
<svg style="left:186.2px;top:156.8px" width="7" height="4" viewBox="0 0 7 4"><path d="M0 0 H6.2 L3.1 3.2Z" fill="#4d5860"/></svg>
<div class="a" style="left:208.4px;top:148.2px;width:39.4px;height:19.8px;background:#fff;border:1px solid #e6e6e6;border-radius:3px"></div>
<div class="t" style="left:213.0px;top:152.5px;color:#7a858d;">红闪</div>
<svg style="left:236.2px;top:156.8px" width="7" height="4" viewBox="0 0 7 4"><path d="M0 0 H6.2 L3.1 3.2Z" fill="#4d5860"/></svg>
<svg style="left:4px;top:178.5px" width="11.2" height="11.2" viewBox="0 0 11.2 11.2"><circle cx="5.6" cy="5.6" r="5" fill="none" stroke="#7a858d" stroke-width="1"/><path d="M3 5.6 H8.2" stroke="#7a858d" stroke-width="1"/></svg>
<div class="a" style="left:16.4px;top:173.3px;width:39.6px;height:19.8px;background:#fff;border:1px solid #e6e6e6;border-radius:3px"></div>
<div class="t" style="left:20.3px;top:179.0px;color:#6c7880;font-size:10.5px;">10</div>
<div class="t" style="left:45.0px;top:179.2px;color:#8a949b;font-size:10px;">s</div>
<div class="a" style="left:62.8px;top:173.3px;width:39.4px;height:19.8px;background:#fff;border:1px solid #e6e6e6;border-radius:3px"></div>
<div class="t" style="left:67.4px;top:177.6px;color:#7a858d;">关闭</div>
<svg style="left:90.6px;top:181.9px" width="7" height="4" viewBox="0 0 7 4"><path d="M0 0 H6.2 L3.1 3.2Z" fill="#4d5860"/></svg>
<div class="a" style="left:108.8px;top:173.3px;width:39.4px;height:19.8px;background:#fff;border:1px solid #e6e6e6;border-radius:3px"></div>
<div class="t" style="left:113.4px;top:177.6px;color:#7a858d;">关闭</div>
<svg style="left:136.6px;top:181.9px" width="7" height="4" viewBox="0 0 7 4"><path d="M0 0 H6.2 L3.1 3.2Z" fill="#4d5860"/></svg>
<div class="a" style="left:158.4px;top:173.3px;width:39.4px;height:19.8px;background:#fff;border:1px solid #e6e6e6;border-radius:3px"></div>
<div class="t" style="left:163.0px;top:177.6px;color:#7a858d;">关闭</div>
<svg style="left:186.2px;top:181.9px" width="7" height="4" viewBox="0 0 7 4"><path d="M0 0 H6.2 L3.1 3.2Z" fill="#4d5860"/></svg>
<div class="a" style="left:208.4px;top:173.3px;width:39.4px;height:19.8px;background:#fff;border:1px solid #e6e6e6;border-radius:3px"></div>
<div class="t" style="left:213.0px;top:177.6px;color:#7a858d;">关闭</div>
<svg style="left:236.2px;top:181.9px" width="7" height="4" viewBox="0 0 7 4"><path d="M0 0 H6.2 L3.1 3.2Z" fill="#4d5860"/></svg>
</div>
<svg style="left:1027.3px;top:335px;" width="11" height="11" viewBox="0 0 11 11"><circle cx="5.5" cy="5.5" r="4.9" fill="none" stroke="#5b6770" stroke-width="1"/><path d="M5.5 2.8 V8.2 M2.8 5.5 H8.2" stroke="#5b6770" stroke-width="1"/></svg>
<div class="t" style="left:1038.0px;top:335.0px;color:#5b6770;">添加交通灯时序</div>
<div class="a" style="left:1020.7px;top:351.6px;width:252.3px;height:3.4px;background:#eeeeee;border-radius:1.7px"></div>
<div class="a" style="left:1020.7px;top:351.6px;width:177.3px;height:3.4px;background:#c9cbcd;border-radius:1.7px"></div>
</body></html>
